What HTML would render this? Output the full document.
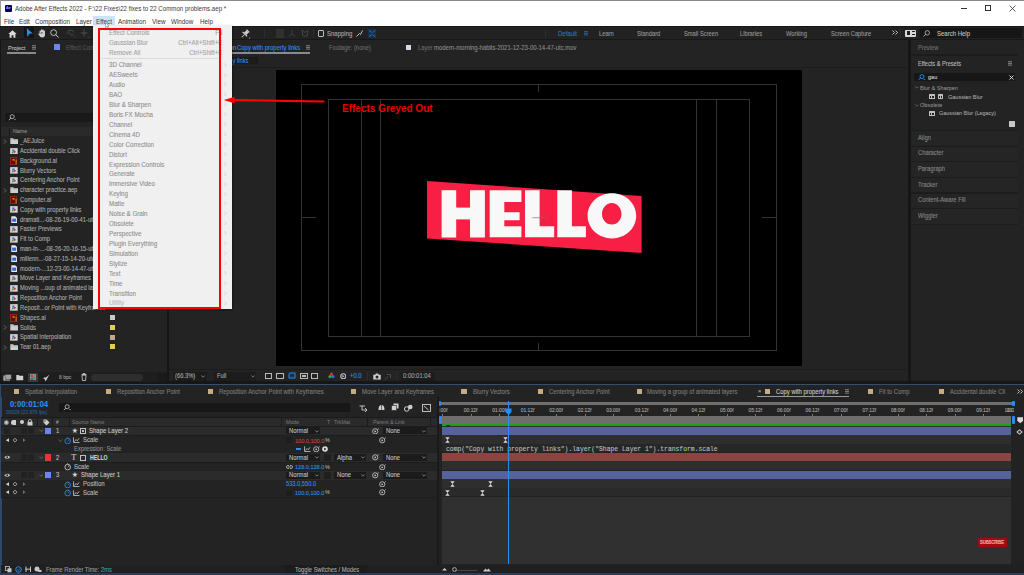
<!DOCTYPE html>
<html><head><meta charset="utf-8"><title>After Effects</title>
<style>
html,body{margin:0;padding:0;}
body{width:1024px;height:575px;overflow:hidden;position:relative;background:#161616;font-family:"Liberation Sans",sans-serif;}
body>div{position:absolute;white-space:nowrap;-webkit-text-stroke:0.1px currentColor;}
</style></head><body>
<div style="left:0px;top:0px;width:1024px;height:575px;background:#161616;"></div>
<div style="left:0px;top:0px;width:1024px;height:25.7px;background:#ffffff;"></div>
<div style="left:0px;top:0px;width:1024px;height:1px;background:#8a8a8a;"></div>
<div style="left:0px;top:0px;width:1px;height:25.7px;background:#9a9a9a;"></div>
<div style="left:5px;top:4.5px;width:7px;height:7px;background:#00005b;border-radius:1px;"></div>
<div style="left:5.6px;top:5.8px;font-size:4.0px;line-height:4.8px;color:#9999ff;font-weight:bold;font-family:'Liberation Sans',sans-serif;transform:scaleX(0.9);transform-origin:0 50%;">Ae</div>
<div style="left:14.5px;top:4.91px;font-size:6.82px;line-height:8.18px;color:#3a3a3a;font-weight:normal;font-family:'Liberation Sans',sans-serif;-webkit-text-stroke:0;transform:scaleX(0.9);transform-origin:0 50%;">Adobe After Effects 2022 - F:\22 Fixes\22 fixes to 22 Common problems.aep *</div>
<div style="left:961px;top:7.5px;width:6px;height:0.8px;background:#333;"></div>
<div style="left:985px;top:5px;width:5.5px;height:5.5px;background:transparent;border:0.8px solid #333;box-sizing:border-box;"></div>
<svg style="position:absolute;left:1009px;top:4.5px;" width="7" height="7" viewBox="0 0 7 7"><path d="M0.5 0.5L6.5 6.5M6.5 0.5L0.5 6.5" stroke="#333" stroke-width="0.8"/></svg>
<div style="left:93.2px;top:16px;width:21.8px;height:9.4px;background:#cce4f7;"></div>
<div style="left:4.2px;top:17.7px;font-size:7.0px;line-height:8.4px;color:#333333;font-weight:normal;font-family:'Liberation Sans',sans-serif;-webkit-text-stroke:0;transform:scaleX(0.9);transform-origin:0 50%;">File</div>
<div style="left:18.7px;top:17.7px;font-size:7.0px;line-height:8.4px;color:#333333;font-weight:normal;font-family:'Liberation Sans',sans-serif;-webkit-text-stroke:0;transform:scaleX(0.9);transform-origin:0 50%;">Edit</div>
<div style="left:35.2px;top:17.7px;font-size:7.0px;line-height:8.4px;color:#333333;font-weight:normal;font-family:'Liberation Sans',sans-serif;-webkit-text-stroke:0;transform:scaleX(0.9);transform-origin:0 50%;">Composition</div>
<div style="left:76.2px;top:17.7px;font-size:7.0px;line-height:8.4px;color:#333333;font-weight:normal;font-family:'Liberation Sans',sans-serif;-webkit-text-stroke:0;transform:scaleX(0.9);transform-origin:0 50%;">Layer</div>
<div style="left:96px;top:17.7px;font-size:7.0px;line-height:8.4px;color:#3a4a65;font-weight:normal;font-family:'Liberation Sans',sans-serif;-webkit-text-stroke:0;transform:scaleX(0.9);transform-origin:0 50%;">Effect</div>
<div style="left:118.3px;top:17.7px;font-size:7.0px;line-height:8.4px;color:#333333;font-weight:normal;font-family:'Liberation Sans',sans-serif;-webkit-text-stroke:0;transform:scaleX(0.9);transform-origin:0 50%;">Animation</div>
<div style="left:152.3px;top:17.7px;font-size:7.0px;line-height:8.4px;color:#333333;font-weight:normal;font-family:'Liberation Sans',sans-serif;-webkit-text-stroke:0;transform:scaleX(0.9);transform-origin:0 50%;">View</div>
<div style="left:171px;top:17.7px;font-size:7.0px;line-height:8.4px;color:#333333;font-weight:normal;font-family:'Liberation Sans',sans-serif;-webkit-text-stroke:0;transform:scaleX(0.9);transform-origin:0 50%;">Window</div>
<div style="left:200px;top:17.7px;font-size:7.0px;line-height:8.4px;color:#333333;font-weight:normal;font-family:'Liberation Sans',sans-serif;-webkit-text-stroke:0;transform:scaleX(0.9);transform-origin:0 50%;">Help</div>
<div style="left:0px;top:25.7px;width:1024px;height:14.3px;background:#181818;"></div>
<div style="left:0px;top:27px;width:1024px;height:11.7px;background:#222222;"></div>
<div style="left:23.9px;top:27.3px;width:9.9px;height:10.7px;background:#141414;"></div>
<svg style="position:absolute;left:8px;top:29.5px;" width="9" height="8" viewBox="0 0 9 8"><path d="M4.5 0.3L0.3 4H1.6V7.7H3.6V5.3H5.4V7.7H7.4V4H8.7Z" fill="#d8d8d8"/></svg>
<svg style="position:absolute;left:25.5px;top:28.3px;" width="8" height="10" viewBox="0 0 8 10"><path d="M0.8 0.3L6.8 5.5L3.8 5.6L1.3 8.9Z" fill="#2d8ceb"/></svg>
<svg style="position:absolute;left:37.5px;top:29px;" width="8.5" height="9" viewBox="0 0 8.5 9"><path d="M1.5 4.2V2.2Q1.5 1.5 2.2 1.5Q2.9 1.5 2.9 2.2V4M2.9 3.5V1Q2.9 0.3 3.6 0.3Q4.3 0.3 4.3 1V3.5M4.3 3.5V1.2Q4.3 0.5 5 0.5Q5.7 0.5 5.7 1.2V4M5.7 4V2.2Q5.7 1.6 6.3 1.6Q7 1.6 7 2.2V5.5Q7 8.5 4.3 8.5Q2 8.5 0.5 5.5L0.4 4.7Q0.8 4 1.5 4.6Z" fill="#d0d0d0"/></svg>
<svg style="position:absolute;left:50px;top:29px;" width="9" height="9" viewBox="0 0 9 9"><circle cx="3.6" cy="3.6" r="2.9" fill="none" stroke="#c8c8c8" stroke-width="0.9"/><path d="M5.7 5.7L8.6 8.6" stroke="#c8c8c8" stroke-width="1"/></svg>
<svg style="position:absolute;left:66px;top:29px;" width="10" height="9" viewBox="0 0 10 9"><path d="M2 5Q0.5 2 4 1.3Q7.5 0.7 7.8 3.5M3 3.5L5.5 6.5L7.5 5.5" fill="none" stroke="#505050" stroke-width="0.9"/><circle cx="8.6" cy="8" r="0.6" fill="#505050"/></svg>
<svg style="position:absolute;left:80px;top:29px;" width="9" height="9" viewBox="0 0 9 9"><path d="M4 0.5V7.5M0.5 4H7.5" stroke="#505050" stroke-width="0.9"/><circle cx="8.2" cy="8.2" r="0.6" fill="#505050"/></svg>
<svg style="position:absolute;left:239.5px;top:28.5px;" width="11" height="10" viewBox="0 0 11 10"><g transform="rotate(45 5 5)" fill="#d0d0d0"><rect x="3" y="0.3" width="4" height="1.3"/><path d="M3.6 1.6H6.4L6.8 4.6H3.2Z"/><rect x="1.8" y="4.6" width="6.4" height="1.2"/><rect x="4.6" y="5.8" width="0.8" height="3.8"/></g><circle cx="9.6" cy="9" r="0.6" fill="#d0d0d0"/></svg>
<div style="left:264px;top:28.5px;width:0.8px;height:9px;background:#2c2c2c;"></div>
<div style="left:275.5px;top:29px;width:8.5px;height:8.5px;background:#303030;"></div>
<svg style="position:absolute;left:288px;top:29px;" width="8" height="9" viewBox="0 0 8 9"><path d="M4 1V4.5L1 7.5M4 4.5L7 7.5" stroke="#4a4a4a" stroke-width="0.8" fill="none"/></svg>
<svg style="position:absolute;left:300.5px;top:29px;" width="8" height="9" viewBox="0 0 8 9"><path d="M1 1L4 3.5L7 1.5L6 7L2 7Z" stroke="#4a4a4a" stroke-width="0.8" fill="none"/></svg>
<div style="left:313px;top:28.5px;width:0.8px;height:9px;background:#2c2c2c;"></div>
<div style="left:317.5px;top:30.3px;width:6.7px;height:6.3px;background:transparent;border:0.9px solid #bdbdbd;box-sizing:border-box;border-radius:1px;"></div>
<div style="left:326.7px;top:29.8px;font-size:6.67px;line-height:8.0px;color:#a8a8a8;font-weight:normal;font-family:'Liberation Sans',sans-serif;transform:scaleX(0.9);transform-origin:0 50%;">Snapping</div>
<svg style="position:absolute;left:355.5px;top:29.5px;" width="7" height="7" viewBox="0 0 7 7"><path d="M0.5 6.5L3.5 3.5L4.5 4.5L6.5 0.5" stroke="#cfcfcf" stroke-width="0.9" fill="none"/></svg>
<div style="left:367.5px;top:28.5px;width:8.5px;height:9px;background:#17324d;"></div>
<svg style="position:absolute;left:367.5px;top:28.5px;" width="8.5" height="9" viewBox="0 0 8.5 9"><path d="M1.5 1.5L3.5 3.5M7 1.5L5 3.5M1.5 7.5L3.5 5.5M7 7.5L5 5.5" stroke="#2d8ceb" stroke-width="0.9"/></svg>
<div style="left:545px;top:28.5px;width:0.8px;height:9px;background:#2c2c2c;"></div>
<div style="left:557.5px;top:30.2px;font-size:6.67px;line-height:8.0px;color:#2a72c0;font-weight:normal;font-family:'Liberation Sans',sans-serif;transform:scaleX(0.9);transform-origin:0 50%;">Default</div>
<svg style="position:absolute;left:583.5px;top:31.3px;" width="4.5" height="5" viewBox="0 0 4.5 5"><path d="M0 0.7H4M0 2.3H4M0 3.9H4" stroke="#2a72c0" stroke-width="0.8"/></svg>
<div style="left:599.4px;top:30.37px;font-size:6.39px;line-height:7.67px;color:#969696;font-weight:normal;font-family:'Liberation Sans',sans-serif;transform:scaleX(0.9);transform-origin:0 50%;">Learn</div>
<div style="left:637px;top:30.37px;font-size:6.39px;line-height:7.67px;color:#969696;font-weight:normal;font-family:'Liberation Sans',sans-serif;transform:scaleX(0.9);transform-origin:0 50%;">Standard</div>
<div style="left:683.75px;top:30.37px;font-size:6.39px;line-height:7.67px;color:#969696;font-weight:normal;font-family:'Liberation Sans',sans-serif;transform:scaleX(0.9);transform-origin:0 50%;">Small Screen</div>
<div style="left:740px;top:30.37px;font-size:6.39px;line-height:7.67px;color:#969696;font-weight:normal;font-family:'Liberation Sans',sans-serif;transform:scaleX(0.9);transform-origin:0 50%;">Libraries</div>
<div style="left:786px;top:30.37px;font-size:6.39px;line-height:7.67px;color:#969696;font-weight:normal;font-family:'Liberation Sans',sans-serif;transform:scaleX(0.9);transform-origin:0 50%;">Working</div>
<div style="left:831px;top:30.37px;font-size:6.39px;line-height:7.67px;color:#969696;font-weight:normal;font-family:'Liberation Sans',sans-serif;transform:scaleX(0.9);transform-origin:0 50%;">Screen Capture</div>
<svg style="position:absolute;left:891.5px;top:30.3px;" width="7" height="5" viewBox="0 0 7 5"><path d="M0.5 0.5L2.5 2.5L0.5 4.5M3.5 0.5L5.5 2.5L3.5 4.5" stroke="#d0d0d0" stroke-width="0.9" fill="none"/></svg>
<div style="left:900px;top:28.5px;width:0.8px;height:9px;background:#2c2c2c;"></div>
<div style="left:905px;top:29.5px;width:11px;height:7px;background:#d8d8d8;border-radius:1px;"></div>
<div style="left:907px;top:31px;width:3px;height:4px;background:#1e1e1e;"></div>
<div style="left:911.5px;top:31px;width:3px;height:1.2px;background:#1e1e1e;"></div>
<div style="left:911.5px;top:33.5px;width:3px;height:1.2px;background:#1e1e1e;"></div>
<div style="left:919.5px;top:28.3px;width:102px;height:9.5px;background:#161616;border-radius:1px;"></div>
<svg style="position:absolute;left:922.5px;top:29.5px;" width="7" height="7" viewBox="0 0 7 7"><circle cx="4.3" cy="2.8" r="2.2" fill="none" stroke="#c0c0c0" stroke-width="0.8"/><path d="M2.7 4.4L0.5 6.6" stroke="#c0c0c0" stroke-width="0.9"/></svg>
<div style="left:936.5px;top:29.8px;font-size:6.67px;line-height:8.0px;color:#c0c0c0;font-weight:normal;font-family:'Liberation Sans',sans-serif;transform:scaleX(0.9);transform-origin:0 50%;">Search Help</div>
<div style="left:1px;top:39.5px;width:166px;height:332px;background:#232323;"></div>
<div style="left:7.75px;top:43.97px;font-size:6.22px;line-height:7.46px;color:#bcbcbc;font-weight:normal;font-family:'Liberation Sans',sans-serif;transform:scaleX(0.9);transform-origin:0 50%;">Project</div>
<div style="left:6.9px;top:52.2px;width:29.4px;height:1.6px;background:#8a8a8a;"></div>
<svg style="position:absolute;left:31.8px;top:45.2px;" width="4.5" height="5" viewBox="0 0 4.5 5"><path d="M0 0.7H4M0 2.4H4M0 4.1H4" stroke="#9a9a9a" stroke-width="0.8"/></svg>
<div style="left:54.3px;top:44.3px;width:5.6px;height:5.3px;background:#6b86f0;border-radius:0.5px;"></div>
<div style="left:65.6px;top:44.27px;font-size:6.56px;line-height:7.87px;color:#555555;font-weight:normal;font-family:'Liberation Sans',sans-serif;transform:scaleX(0.9);transform-origin:0 50%;">Effect Controls Shape Layer 2</div>
<div style="left:5px;top:112.6px;width:162px;height:9.2px;background:#191919;"></div>
<svg style="position:absolute;left:7.5px;top:114px;" width="9" height="7" viewBox="0 0 9 7"><circle cx="4.2" cy="2.7" r="2" fill="none" stroke="#c8c8c8" stroke-width="0.8"/><path d="M2.8 4.2L0.8 6.2" stroke="#c8c8c8" stroke-width="0.9"/><path d="M6 5.2H8L7 6.3Z" fill="#c8c8c8"/></svg>
<div style="left:1px;top:126.7px;width:166px;height:9.3px;background:#2a2a2a;"></div>
<div style="left:8.5px;top:127.5px;width:0.7px;height:8px;background:#1a1a1a;"></div>
<div style="left:12.5px;top:128.06px;font-size:5.89px;line-height:7.07px;color:#8c8c8c;font-weight:normal;font-family:'Liberation Sans',sans-serif;transform:scaleX(0.9);transform-origin:0 50%;">Name</div>
<svg style="position:absolute;left:2.5px;top:138.5px;" width="4" height="5" viewBox="0 0 4 5"><path d="M1 0.5L3 2.5L1 4.5" stroke="#8a8a8a" stroke-width="0.7" fill="none"/></svg>
<svg style="position:absolute;left:9.6px;top:137.6px;" width="8.5" height="6.8" viewBox="0 0 8.5 6.8"><path d="M0.3 0.3H3.2L4 1.2H8.2V6.5H0.3Z" fill="#cfcfcf"/><path d="M0.3 1.9H8.2" stroke="#9a9a9a" stroke-width="0.5"/></svg>
<div style="left:20px;top:137.13px;font-size:6.44px;line-height:7.73px;color:#aaaaaa;font-weight:normal;font-family:'Liberation Sans',sans-serif;transform:scaleX(0.9);transform-origin:0 50%;">_AEJuice</div>
<svg style="position:absolute;left:9.8px;top:147.51px;" width="7.8" height="6.8" viewBox="0 0 7.8 6.8"><rect x="0" y="0" width="7.8" height="6.8" rx="0.6" fill="#bcbcbc"/><rect x="0.9" y="0.9" width="6" height="5" fill="#d4d4d4"/><path d="M2.2 1.6L4.6 1.4L4.2 3.6L2.4 3.4Z" fill="#3d6fd0"/><path d="M4.6 2.6L6 3.8L4.6 5.2L3.4 4Z" fill="#c33a2e"/><path d="M2 3.6L3.6 4.2L3.2 5.6L1.8 5.2Z" fill="#3a9a44"/></svg>
<div style="left:20px;top:146.94px;font-size:6.44px;line-height:7.73px;color:#aaaaaa;font-weight:normal;font-family:'Liberation Sans',sans-serif;transform:scaleX(0.9);transform-origin:0 50%;">Accidental double Click</div>
<svg style="position:absolute;left:10.2px;top:156.62px;" width="7.2" height="8" viewBox="0 0 7.2 8"><rect x="0" y="0" width="7.2" height="8" fill="#9a2a1a"/><rect x="0.8" y="0.8" width="5.6" height="6.4" fill="#6a0a06"/><path d="M2 3.2Q2.5 1.8 4 2Q5.2 2.2 4.6 3.6L4 4.2L3.6 3.4Z" fill="#e08a1a"/><rect x="5.6" y="2.6" width="1" height="4.6" fill="#d88a20"/></svg>
<div style="left:20px;top:156.75px;font-size:6.44px;line-height:7.73px;color:#aaaaaa;font-weight:normal;font-family:'Liberation Sans',sans-serif;transform:scaleX(0.9);transform-origin:0 50%;">Background.ai</div>
<svg style="position:absolute;left:9.8px;top:167.13px;" width="7.8" height="6.8" viewBox="0 0 7.8 6.8"><rect x="0" y="0" width="7.8" height="6.8" rx="0.6" fill="#bcbcbc"/><rect x="0.9" y="0.9" width="6" height="5" fill="#d4d4d4"/><path d="M2.2 1.6L4.6 1.4L4.2 3.6L2.4 3.4Z" fill="#3d6fd0"/><path d="M4.6 2.6L6 3.8L4.6 5.2L3.4 4Z" fill="#c33a2e"/><path d="M2 3.6L3.6 4.2L3.2 5.6L1.8 5.2Z" fill="#3a9a44"/></svg>
<div style="left:20px;top:166.56px;font-size:6.44px;line-height:7.73px;color:#aaaaaa;font-weight:normal;font-family:'Liberation Sans',sans-serif;transform:scaleX(0.9);transform-origin:0 50%;">Blurry Vectors</div>
<svg style="position:absolute;left:9.8px;top:176.94px;" width="7.8" height="6.8" viewBox="0 0 7.8 6.8"><rect x="0" y="0" width="7.8" height="6.8" rx="0.6" fill="#bcbcbc"/><rect x="0.9" y="0.9" width="6" height="5" fill="#d4d4d4"/><path d="M2.2 1.6L4.6 1.4L4.2 3.6L2.4 3.4Z" fill="#3d6fd0"/><path d="M4.6 2.6L6 3.8L4.6 5.2L3.4 4Z" fill="#c33a2e"/><path d="M2 3.6L3.6 4.2L3.2 5.6L1.8 5.2Z" fill="#3a9a44"/></svg>
<div style="left:20px;top:176.38px;font-size:6.44px;line-height:7.73px;color:#aaaaaa;font-weight:normal;font-family:'Liberation Sans',sans-serif;transform:scaleX(0.9);transform-origin:0 50%;">Centering Anchor Point</div>
<svg style="position:absolute;left:2.5px;top:187.55px;" width="4" height="5" viewBox="0 0 4 5"><path d="M1 0.5L3 2.5L1 4.5" stroke="#8a8a8a" stroke-width="0.7" fill="none"/></svg>
<svg style="position:absolute;left:9.6px;top:186.65px;" width="8.5" height="6.8" viewBox="0 0 8.5 6.8"><path d="M0.3 0.3H3.2L4 1.2H8.2V6.5H0.3Z" fill="#cfcfcf"/><path d="M0.3 1.9H8.2" stroke="#9a9a9a" stroke-width="0.5"/></svg>
<div style="left:20px;top:186.19px;font-size:6.44px;line-height:7.73px;color:#aaaaaa;font-weight:normal;font-family:'Liberation Sans',sans-serif;transform:scaleX(0.9);transform-origin:0 50%;">character practice.aep</div>
<svg style="position:absolute;left:10.2px;top:195.86px;" width="7.2" height="8" viewBox="0 0 7.2 8"><rect x="0" y="0" width="7.2" height="8" fill="#9a2a1a"/><rect x="0.8" y="0.8" width="5.6" height="6.4" fill="#6a0a06"/><path d="M2 3.2Q2.5 1.8 4 2Q5.2 2.2 4.6 3.6L4 4.2L3.6 3.4Z" fill="#e08a1a"/><rect x="5.6" y="2.6" width="1" height="4.6" fill="#d88a20"/></svg>
<div style="left:20px;top:196.0px;font-size:6.44px;line-height:7.73px;color:#aaaaaa;font-weight:normal;font-family:'Liberation Sans',sans-serif;transform:scaleX(0.9);transform-origin:0 50%;">Computer.ai</div>
<svg style="position:absolute;left:9.8px;top:206.37px;" width="7.8" height="6.8" viewBox="0 0 7.8 6.8"><rect x="0" y="0" width="7.8" height="6.8" rx="0.6" fill="#bcbcbc"/><rect x="0.9" y="0.9" width="6" height="5" fill="#d4d4d4"/><path d="M2.2 1.6L4.6 1.4L4.2 3.6L2.4 3.4Z" fill="#3d6fd0"/><path d="M4.6 2.6L6 3.8L4.6 5.2L3.4 4Z" fill="#c33a2e"/><path d="M2 3.6L3.6 4.2L3.2 5.6L1.8 5.2Z" fill="#3a9a44"/></svg>
<div style="left:20px;top:205.81px;font-size:6.44px;line-height:7.73px;color:#aaaaaa;font-weight:normal;font-family:'Liberation Sans',sans-serif;transform:scaleX(0.9);transform-origin:0 50%;">Copy with property links</div>
<svg style="position:absolute;left:10.8px;top:215.88000000000002px;" width="6.4" height="7.4" viewBox="0 0 6.4 7.4"><path d="M0.3 0.3H4.2L6.1 2.2V7.1H0.3Z" fill="#e6e9f0"/><rect x="1.2" y="2.6" width="4" height="3.2" fill="#3569d4"/></svg>
<div style="left:20px;top:215.62px;font-size:6.44px;line-height:7.73px;color:#aaaaaa;font-weight:normal;font-family:'Liberation Sans',sans-serif;transform:scaleX(0.9);transform-origin:0 50%;">dramati...-08-26-19-00-41-utc.mov</div>
<svg style="position:absolute;left:9.8px;top:225.99px;" width="7.8" height="6.8" viewBox="0 0 7.8 6.8"><rect x="0" y="0" width="7.8" height="6.8" rx="0.6" fill="#bcbcbc"/><rect x="0.9" y="0.9" width="6" height="5" fill="#d4d4d4"/><path d="M2.2 1.6L4.6 1.4L4.2 3.6L2.4 3.4Z" fill="#3d6fd0"/><path d="M4.6 2.6L6 3.8L4.6 5.2L3.4 4Z" fill="#c33a2e"/><path d="M2 3.6L3.6 4.2L3.2 5.6L1.8 5.2Z" fill="#3a9a44"/></svg>
<div style="left:20px;top:225.43px;font-size:6.44px;line-height:7.73px;color:#aaaaaa;font-weight:normal;font-family:'Liberation Sans',sans-serif;transform:scaleX(0.9);transform-origin:0 50%;">Faster Previews</div>
<svg style="position:absolute;left:9.8px;top:235.8px;" width="7.8" height="6.8" viewBox="0 0 7.8 6.8"><rect x="0" y="0" width="7.8" height="6.8" rx="0.6" fill="#bcbcbc"/><rect x="0.9" y="0.9" width="6" height="5" fill="#d4d4d4"/><path d="M2.2 1.6L4.6 1.4L4.2 3.6L2.4 3.4Z" fill="#3d6fd0"/><path d="M4.6 2.6L6 3.8L4.6 5.2L3.4 4Z" fill="#c33a2e"/><path d="M2 3.6L3.6 4.2L3.2 5.6L1.8 5.2Z" fill="#3a9a44"/></svg>
<div style="left:20px;top:235.24px;font-size:6.44px;line-height:7.73px;color:#aaaaaa;font-weight:normal;font-family:'Liberation Sans',sans-serif;transform:scaleX(0.9);transform-origin:0 50%;">Fit to Comp</div>
<svg style="position:absolute;left:10.8px;top:245.31000000000003px;" width="6.4" height="7.4" viewBox="0 0 6.4 7.4"><path d="M0.3 0.3H4.2L6.1 2.2V7.1H0.3Z" fill="#e6e9f0"/><rect x="1.2" y="2.6" width="4" height="3.2" fill="#3569d4"/></svg>
<div style="left:20px;top:245.05px;font-size:6.44px;line-height:7.73px;color:#aaaaaa;font-weight:normal;font-family:'Liberation Sans',sans-serif;transform:scaleX(0.9);transform-origin:0 50%;">man-in-...-08-26-20-16-15-utc.mov</div>
<svg style="position:absolute;left:10.8px;top:255.12000000000003px;" width="6.4" height="7.4" viewBox="0 0 6.4 7.4"><path d="M0.3 0.3H4.2L6.1 2.2V7.1H0.3Z" fill="#e6e9f0"/><rect x="1.2" y="2.6" width="4" height="3.2" fill="#3569d4"/></svg>
<div style="left:20px;top:254.86px;font-size:6.44px;line-height:7.73px;color:#aaaaaa;font-weight:normal;font-family:'Liberation Sans',sans-serif;transform:scaleX(0.9);transform-origin:0 50%;">millenn...-08-27-15-14-20-utc.mov</div>
<svg style="position:absolute;left:10.8px;top:264.92999999999995px;" width="6.4" height="7.4" viewBox="0 0 6.4 7.4"><path d="M0.3 0.3H4.2L6.1 2.2V7.1H0.3Z" fill="#e6e9f0"/><rect x="1.2" y="2.6" width="4" height="3.2" fill="#3569d4"/></svg>
<div style="left:20px;top:264.66px;font-size:6.44px;line-height:7.73px;color:#aaaaaa;font-weight:normal;font-family:'Liberation Sans',sans-serif;transform:scaleX(0.9);transform-origin:0 50%;">modern-...12-23-00-14-47-utc.mov</div>
<svg style="position:absolute;left:9.8px;top:275.04px;" width="7.8" height="6.8" viewBox="0 0 7.8 6.8"><rect x="0" y="0" width="7.8" height="6.8" rx="0.6" fill="#bcbcbc"/><rect x="0.9" y="0.9" width="6" height="5" fill="#d4d4d4"/><path d="M2.2 1.6L4.6 1.4L4.2 3.6L2.4 3.4Z" fill="#3d6fd0"/><path d="M4.6 2.6L6 3.8L4.6 5.2L3.4 4Z" fill="#c33a2e"/><path d="M2 3.6L3.6 4.2L3.2 5.6L1.8 5.2Z" fill="#3a9a44"/></svg>
<div style="left:20px;top:274.48px;font-size:6.44px;line-height:7.73px;color:#aaaaaa;font-weight:normal;font-family:'Liberation Sans',sans-serif;transform:scaleX(0.9);transform-origin:0 50%;">Move Layer and Keyframes</div>
<svg style="position:absolute;left:9.8px;top:284.84999999999997px;" width="7.8" height="6.8" viewBox="0 0 7.8 6.8"><rect x="0" y="0" width="7.8" height="6.8" rx="0.6" fill="#bcbcbc"/><rect x="0.9" y="0.9" width="6" height="5" fill="#d4d4d4"/><path d="M2.2 1.6L4.6 1.4L4.2 3.6L2.4 3.4Z" fill="#3d6fd0"/><path d="M4.6 2.6L6 3.8L4.6 5.2L3.4 4Z" fill="#c33a2e"/><path d="M2 3.6L3.6 4.2L3.2 5.6L1.8 5.2Z" fill="#3a9a44"/></svg>
<div style="left:20px;top:284.28px;font-size:6.44px;line-height:7.73px;color:#aaaaaa;font-weight:normal;font-family:'Liberation Sans',sans-serif;transform:scaleX(0.9);transform-origin:0 50%;">Moving ...oup of animated layers</div>
<svg style="position:absolute;left:9.8px;top:294.66px;" width="7.8" height="6.8" viewBox="0 0 7.8 6.8"><rect x="0" y="0" width="7.8" height="6.8" rx="0.6" fill="#bcbcbc"/><rect x="0.9" y="0.9" width="6" height="5" fill="#d4d4d4"/><path d="M2.2 1.6L4.6 1.4L4.2 3.6L2.4 3.4Z" fill="#3d6fd0"/><path d="M4.6 2.6L6 3.8L4.6 5.2L3.4 4Z" fill="#c33a2e"/><path d="M2 3.6L3.6 4.2L3.2 5.6L1.8 5.2Z" fill="#3a9a44"/></svg>
<div style="left:20px;top:294.1px;font-size:6.44px;line-height:7.73px;color:#aaaaaa;font-weight:normal;font-family:'Liberation Sans',sans-serif;transform:scaleX(0.9);transform-origin:0 50%;">Reposition Anchor Point</div>
<svg style="position:absolute;left:9.8px;top:304.46999999999997px;" width="7.8" height="6.8" viewBox="0 0 7.8 6.8"><rect x="0" y="0" width="7.8" height="6.8" rx="0.6" fill="#bcbcbc"/><rect x="0.9" y="0.9" width="6" height="5" fill="#d4d4d4"/><path d="M2.2 1.6L4.6 1.4L4.2 3.6L2.4 3.4Z" fill="#3d6fd0"/><path d="M4.6 2.6L6 3.8L4.6 5.2L3.4 4Z" fill="#c33a2e"/><path d="M2 3.6L3.6 4.2L3.2 5.6L1.8 5.2Z" fill="#3a9a44"/></svg>
<div style="left:20px;top:303.9px;font-size:6.44px;line-height:7.73px;color:#aaaaaa;font-weight:normal;font-family:'Liberation Sans',sans-serif;transform:scaleX(0.9);transform-origin:0 50%;">Reposit...or Point with Keyframes</div>
<svg style="position:absolute;left:10.2px;top:313.58000000000004px;" width="7.2" height="8" viewBox="0 0 7.2 8"><rect x="0" y="0" width="7.2" height="8" fill="#9a2a1a"/><rect x="0.8" y="0.8" width="5.6" height="6.4" fill="#6a0a06"/><path d="M2 3.2Q2.5 1.8 4 2Q5.2 2.2 4.6 3.6L4 4.2L3.6 3.4Z" fill="#e08a1a"/><rect x="5.6" y="2.6" width="1" height="4.6" fill="#d88a20"/></svg>
<div style="left:20px;top:313.72px;font-size:6.44px;line-height:7.73px;color:#aaaaaa;font-weight:normal;font-family:'Liberation Sans',sans-serif;transform:scaleX(0.9);transform-origin:0 50%;">Shapes.ai</div>
<div style="left:110px;top:314.98px;width:5px;height:5px;background:#c9c9c9;"></div>
<svg style="position:absolute;left:2.5px;top:324.89px;" width="4" height="5" viewBox="0 0 4 5"><path d="M1 0.5L3 2.5L1 4.5" stroke="#8a8a8a" stroke-width="0.7" fill="none"/></svg>
<svg style="position:absolute;left:9.6px;top:323.99px;" width="8.5" height="6.8" viewBox="0 0 8.5 6.8"><path d="M0.3 0.3H3.2L4 1.2H8.2V6.5H0.3Z" fill="#cfcfcf"/><path d="M0.3 1.9H8.2" stroke="#9a9a9a" stroke-width="0.5"/></svg>
<div style="left:20px;top:323.52px;font-size:6.44px;line-height:7.73px;color:#aaaaaa;font-weight:normal;font-family:'Liberation Sans',sans-serif;transform:scaleX(0.9);transform-origin:0 50%;">Solids</div>
<div style="left:110px;top:324.78999999999996px;width:5px;height:5px;background:#e3cf4f;"></div>
<svg style="position:absolute;left:9.8px;top:333.90000000000003px;" width="7.8" height="6.8" viewBox="0 0 7.8 6.8"><rect x="0" y="0" width="7.8" height="6.8" rx="0.6" fill="#bcbcbc"/><rect x="0.9" y="0.9" width="6" height="5" fill="#d4d4d4"/><path d="M2.2 1.6L4.6 1.4L4.2 3.6L2.4 3.4Z" fill="#3d6fd0"/><path d="M4.6 2.6L6 3.8L4.6 5.2L3.4 4Z" fill="#c33a2e"/><path d="M2 3.6L3.6 4.2L3.2 5.6L1.8 5.2Z" fill="#3a9a44"/></svg>
<div style="left:20px;top:333.34px;font-size:6.44px;line-height:7.73px;color:#aaaaaa;font-weight:normal;font-family:'Liberation Sans',sans-serif;transform:scaleX(0.9);transform-origin:0 50%;">Spatial Interpolation</div>
<div style="left:110px;top:334.6px;width:5px;height:5px;background:#bfa98a;"></div>
<svg style="position:absolute;left:2.5px;top:344.51px;" width="4" height="5" viewBox="0 0 4 5"><path d="M1 0.5L3 2.5L1 4.5" stroke="#8a8a8a" stroke-width="0.7" fill="none"/></svg>
<svg style="position:absolute;left:9.6px;top:343.61px;" width="8.5" height="6.8" viewBox="0 0 8.5 6.8"><path d="M0.3 0.3H3.2L4 1.2H8.2V6.5H0.3Z" fill="#cfcfcf"/><path d="M0.3 1.9H8.2" stroke="#9a9a9a" stroke-width="0.5"/></svg>
<div style="left:20px;top:343.14px;font-size:6.44px;line-height:7.73px;color:#aaaaaa;font-weight:normal;font-family:'Liberation Sans',sans-serif;transform:scaleX(0.9);transform-origin:0 50%;">Tear 01.aep</div>
<div style="left:110px;top:344.40999999999997px;width:5px;height:5px;background:#e3cf4f;"></div>
<div style="left:1px;top:372.3px;width:166px;height:9.9px;background:#1e1e1e;"></div>
<div style="left:158px;top:372.6px;width:8.5px;height:9.3px;background:#1a1a1a;"></div>
<svg style="position:absolute;left:3px;top:373.8px;" width="9" height="7" viewBox="0 0 9 7"><rect x="0.5" y="1.5" width="6.5" height="5" fill="#cfcfcf"/><rect x="2" y="0.3" width="6.5" height="5" fill="#a0a0a0" stroke="#1c1c1c" stroke-width="0.5"/></svg>
<svg style="position:absolute;left:16.4px;top:374px;" width="7.5" height="6.5" viewBox="0 0 7.5 6.5"><path d="M0.3 1H2.8L3.5 1.8H7.2V6.2H0.3Z" fill="#d0d0d0"/></svg>
<div style="left:28px;top:373px;width:9.5px;height:8.5px;background:#3a3a3a;"></div>
<div style="left:29.5px;top:374.3px;width:6.5px;height:5.8px;background:#8a8a8a;"></div>
<div style="left:30.5px;top:375.2px;width:2.3px;height:2.3px;background:#d03030;"></div>
<div style="left:32.6px;top:376.8px;width:2.3px;height:2.3px;background:#3aa040;"></div>
<div style="left:31px;top:377.5px;width:2px;height:2px;background:#3060d0;"></div>
<svg style="position:absolute;left:43px;top:373.5px;" width="7" height="8" viewBox="0 0 7 8"><path d="M6.5 0.5L3 3.5L1 3.5L0.5 5L2 5.2L2.3 7.5L3.5 6L4.5 4L6.5 0.5Z" fill="#cccccc"/></svg>
<div style="left:59.4px;top:373.97px;font-size:5.56px;line-height:6.67px;color:#9a9a9a;font-weight:normal;font-family:'Liberation Sans',sans-serif;transform:scaleX(0.9);transform-origin:0 50%;">8 bpc</div>
<svg style="position:absolute;left:80.5px;top:373.3px;" width="6" height="8" viewBox="0 0 6 8"><path d="M0.5 1.5H5.5M2 1.5V0.5H4V1.5M1 2.2H5L4.6 7.5H1.4Z" fill="none" stroke="#cfcfcf" stroke-width="0.8"/></svg>
<div style="left:91.4px;top:373.8px;width:51.6px;height:7px;background:#2e2e2e;border-radius:3.5px;"></div>
<div style="left:168.6px;top:39.5px;width:739.6px;height:332px;background:#232323;"></div>
<div style="left:202.6px;top:43.64px;font-size:6.61px;line-height:7.93px;color:#8a8a8a;font-weight:normal;font-family:'Liberation Sans',sans-serif;transform:scaleX(0.9);transform-origin:0 50%;">Composition</div>
<div style="left:236.7px;top:43.64px;font-size:6.61px;line-height:7.93px;color:#2d8ceb;font-weight:normal;font-family:'Liberation Sans',sans-serif;transform:scaleX(0.9);transform-origin:0 50%;">Copy with property links</div>
<svg style="position:absolute;left:306px;top:45.2px;" width="4.5" height="5" viewBox="0 0 4.5 5"><path d="M0 0.7H4M0 2.4H4M0 4.1H4" stroke="#9a9a9a" stroke-width="0.8"/></svg>
<div style="left:172px;top:52.2px;width:138px;height:1.6px;background:#8a8a8a;"></div>
<div style="left:328.8px;top:43.66px;font-size:6.56px;line-height:7.87px;color:#6a6a6a;font-weight:normal;font-family:'Liberation Sans',sans-serif;transform:scaleX(0.9);transform-origin:0 50%;">Footage: (none)</div>
<div style="left:406px;top:45px;width:5px;height:5px;background:#d4dbe6;"></div>
<div style="left:417.5px;top:43.66px;font-size:6.56px;line-height:7.87px;color:#6a6a6a;font-weight:normal;font-family:'Liberation Sans',sans-serif;transform:scaleX(0.9);transform-origin:0 50%;">Layer</div>
<div style="left:433.75px;top:43.64px;font-size:6.61px;line-height:7.93px;color:#8a8a8a;font-weight:normal;font-family:'Liberation Sans',sans-serif;transform:scaleX(0.9);transform-origin:0 50%;">modern-morning-habits-2021-12-23-00-14-47-utc.mov</div>
<div style="left:174px;top:56.8px;width:84px;height:7.6px;background:#1b1b1b;"></div>
<div style="left:187px;top:56.53px;font-size:6.44px;line-height:7.73px;color:#2d8ceb;font-weight:normal;font-family:'Liberation Sans',sans-serif;transform:scaleX(0.9);transform-origin:0 50%;">Copy with property links</div>
<div style="left:168.6px;top:67px;width:739.6px;height:0.8px;background:#1c1c1c;"></div>
<div style="left:275.6px;top:70px;width:526.6px;height:296px;background:#000000;"></div>
<div style="left:301.3px;top:83.8px;width:475.3px;height:267.2px;background:transparent;border:1.2px solid #333333;box-sizing:border-box;"></div>
<div style="left:327.5px;top:98.5px;width:422.2px;height:238.6px;background:transparent;border:1.2px solid #333333;box-sizing:border-box;"></div>
<div style="left:360.6px;top:98.5px;width:1.2px;height:238.6px;background:#333333;"></div>
<div style="left:380.1px;top:98.5px;width:1.2px;height:238.6px;background:#333333;"></div>
<div style="left:695.6px;top:98.5px;width:1.2px;height:238.6px;background:#333333;"></div>
<div style="left:715.8px;top:98.5px;width:1.2px;height:238.6px;background:#333333;"></div>
<div style="left:301.3px;top:216.7px;width:14.7px;height:1.2px;background:#333333;"></div>
<div style="left:761.8px;top:216.7px;width:14.7px;height:1.2px;background:#333333;"></div>
<div style="left:538px;top:83.8px;width:1.2px;height:7.8px;background:#333333;"></div>
<div style="left:538px;top:343.2px;width:1.2px;height:7.8px;background:#333333;"></div>
<svg style="position:absolute;left:420px;top:175px;" width="230" height="85" viewBox="0 0 230 85">
<polygon points="7,6 221.6,21 221.6,78 7,63.5" fill="#f81f44"/>
<g fill="#f8f8f8">
<rect x="21.6" y="15.2" width="14.6" height="47.3"/>
<rect x="50" y="15.2" width="14.9" height="47.3"/>
<rect x="36" y="32.6" width="14.2" height="11.8"/>
<path d="M69.7 15.3H101.4V26.9H84.3V37.3H99.6V45.2H84.3V51.2H101.4V62.2H69.7Z"/>
<path d="M105 15.3H119.6V51.2H134.2V62.2H105Z"/>
<path d="M137.3 15.3H151.9V51.2H165.9V62.2H137.3Z"/>
<path fill-rule="evenodd" d="M192 18.2C205.6 18.2 216.2 28.2 216.2 40.8C216.2 53.4 205.6 63.4 192 63.4C178.4 63.4 167.6 53.4 167.6 40.8C167.6 28.2 178.4 18.2 192 18.2ZM191.8 28C185.9 28 182 33.4 182 38.9C182 44.4 185.9 49.5 191.8 49.5C197.6 49.5 201.5 44.4 201.5 38.9C201.5 33.4 197.6 28 191.8 28Z"/>
</g>
<path d="M112.3 42.7H126.3" stroke="#777" stroke-width="0.7"/>
</svg>
<div style="left:168.6px;top:369.3px;width:739.6px;height:0.8px;background:#1c1c1c;"></div>
<div style="left:168.6px;top:370.1px;width:739.6px;height:10.9px;background:#232323;"></div>
<div style="left:172.5px;top:372px;width:34.5px;height:8.5px;background:#1c1c1c;"></div>
<div style="left:174.8px;top:372.33px;font-size:6.44px;line-height:7.73px;color:#a8a8a8;font-weight:normal;font-family:'Liberation Sans',sans-serif;transform:scaleX(0.9);transform-origin:0 50%;">(66.3%)</div>
<svg style="position:absolute;left:201px;top:374.8px;" width="4" height="3" viewBox="0 0 4 3"><path d="M0.3 0.5L2 2.2L3.7 0.5" stroke="#a0a0a0" stroke-width="0.7" fill="none"/></svg>
<div style="left:214px;top:372px;width:42px;height:8.5px;background:#1c1c1c;"></div>
<div style="left:217px;top:372.33px;font-size:6.44px;line-height:7.73px;color:#a8a8a8;font-weight:normal;font-family:'Liberation Sans',sans-serif;transform:scaleX(0.9);transform-origin:0 50%;">Full</div>
<svg style="position:absolute;left:250.5px;top:374.8px;" width="4" height="3" viewBox="0 0 4 3"><path d="M0.3 0.5L2 2.2L3.7 0.5" stroke="#a0a0a0" stroke-width="0.7" fill="none"/></svg>
<div style="left:264.7px;top:372.5px;width:7.5px;height:6.5px;background:transparent;border:0.8px solid #b8b8b8;box-sizing:border-box;"></div>
<div style="left:276.4px;top:372.5px;width:7.5px;height:6.5px;background:transparent;border:0.8px solid #b8b8b8;box-sizing:border-box;"></div>
<div style="left:300px;top:372.5px;width:7.5px;height:6.5px;background:transparent;border:0.8px solid #b8b8b8;box-sizing:border-box;"></div>
<div style="left:310.8px;top:372.5px;width:7.5px;height:6.5px;background:transparent;border:0.8px solid #b8b8b8;box-sizing:border-box;"></div>
<div style="left:288px;top:372.3px;width:8px;height:7px;background:#17324d;"></div>
<svg style="position:absolute;left:288px;top:372.3px;" width="8" height="7" viewBox="0 0 8 7"><path d="M1 6V3Q1 1 3 1H7V6Z" fill="none" stroke="#2d8ceb" stroke-width="0.9"/></svg>
<div style="left:302px;top:374.5px;width:3.5px;height:2.5px;background:#b8b8b8;"></div>
<svg style="position:absolute;left:328px;top:372.3px;" width="7" height="8" viewBox="0 0 7 8"><circle cx="3.5" cy="2" r="1.6" fill="#e03030"/><circle cx="2" cy="4.5" r="1.6" fill="#30b040"/><circle cx="5" cy="4.5" r="1.6" fill="#3070e0"/></svg>
<svg style="position:absolute;left:339.7px;top:372.5px;" width="6.5" height="6.5" viewBox="0 0 6.5 6.5"><circle cx="3.25" cy="3.25" r="2.5" fill="none" stroke="#c0c0c0" stroke-width="1.1"/><path d="M2.3 2L4.6 3.25L2.3 4.5Z" fill="#c0c0c0"/></svg>
<div style="left:349.8px;top:372.33px;font-size:6.44px;line-height:7.73px;color:#2d8ceb;font-weight:normal;font-family:'Liberation Sans',sans-serif;transform:scaleX(0.9);transform-origin:0 50%;">+0.0</div>
<div style="left:367px;top:372px;width:0.7px;height:8px;background:#2e2e2e;"></div>
<svg style="position:absolute;left:372.5px;top:372.5px;" width="8" height="7" viewBox="0 0 8 7"><path d="M0.3 1.8H2.2L3 0.5H5L5.8 1.8H7.7V6.5H0.3Z" fill="#cfcfcf"/><circle cx="4" cy="4" r="1.5" fill="#232323"/></svg>
<svg style="position:absolute;left:384px;top:372.5px;" width="8" height="7" viewBox="0 0 8 7"><path d="M1 6.5L4 3.5M3 1.5H6.5V5" stroke="#505050" stroke-width="0.9" fill="none"/></svg>
<div style="left:396px;top:372px;width:0.7px;height:8px;background:#2e2e2e;"></div>
<div style="left:400.6px;top:372px;width:34.4px;height:8.5px;background:#1c1c1c;"></div>
<div style="left:403px;top:372.26px;font-size:6.56px;line-height:7.87px;color:#a0a0a0;font-weight:normal;font-family:'Liberation Sans',sans-serif;transform:scaleX(0.9);transform-origin:0 50%;">0:00:01:04</div>
<div style="left:911px;top:40px;width:113px;height:341px;background:#232323;"></div>
<div style="left:917.6px;top:44.1px;font-size:6.33px;line-height:7.6px;color:#707070;font-weight:normal;font-family:'Liberation Sans',sans-serif;transform:scaleX(0.9);transform-origin:0 50%;">Preview</div>
<div style="left:911px;top:54.4px;width:107px;height:1.4px;background:#1c1c1c;"></div>
<div style="left:917.6px;top:60.03px;font-size:6.28px;line-height:7.54px;color:#b8b8b8;font-weight:normal;font-family:'Liberation Sans',sans-serif;transform:scaleX(0.9);transform-origin:0 50%;">Effects &amp; Presets</div>
<svg style="position:absolute;left:1008px;top:61.3px;" width="4.5" height="5" viewBox="0 0 4.5 5"><path d="M0 0.7H4M0 2.4H4M0 4.1H4" stroke="#9a9a9a" stroke-width="0.8"/></svg>
<div style="left:914.3px;top:72.7px;width:100.5px;height:8.5px;background:#171717;"></div>
<svg style="position:absolute;left:916px;top:73.8px;" width="10" height="6.5" viewBox="0 0 10 6.5"><circle cx="6" cy="2.6" r="2" fill="none" stroke="#2d8ceb" stroke-width="0.9"/><path d="M4.6 4L2.4 6.2" stroke="#2d8ceb" stroke-width="1"/><path d="M7.3 5H9.5L8.4 6.2Z" fill="#2d8ceb"/></svg>
<div style="left:927.6px;top:73.47px;font-size:6.22px;line-height:7.46px;color:#c8c8c8;font-weight:normal;font-family:'Liberation Sans',sans-serif;transform:scaleX(0.9);transform-origin:0 50%;">gau</div>
<svg style="position:absolute;left:1008.8px;top:74.5px;" width="5" height="5" viewBox="0 0 5 5"><path d="M0.5 0.5L4.5 4.5M4.5 0.5L0.5 4.5" stroke="#e0e0e0" stroke-width="1"/></svg>
<svg style="position:absolute;left:914.5px;top:86.3px;" width="4" height="3" viewBox="0 0 4 3"><path d="M0.3 0.5L2 2.2L3.7 0.5" stroke="#8a8a8a" stroke-width="0.6" fill="none"/></svg>
<div style="left:919.5px;top:84.27px;font-size:6.22px;line-height:7.46px;color:#8a8a8a;font-weight:normal;font-family:'Liberation Sans',sans-serif;transform:scaleX(0.9);transform-origin:0 50%;">Blur &amp; Sharpen</div>
<div style="left:929.2px;top:94px;width:5.5px;height:5px;background:#c0c0c0;border-radius:0.5px;"></div>
<div style="left:930.2px;top:95.6px;width:1.3px;height:2.6px;background:#232323;"></div>
<div style="left:932.4000000000001px;top:95.6px;width:1.3px;height:2.6px;background:#232323;"></div>
<div style="left:937.5px;top:94px;width:5.5px;height:5px;background:#c0c0c0;border-radius:0.5px;"></div>
<div style="left:938.5px;top:95.6px;width:1.3px;height:2.6px;background:#232323;"></div>
<div style="left:940.7px;top:95.6px;width:1.3px;height:2.6px;background:#232323;"></div>
<div style="left:947.5px;top:93.13px;font-size:6.11px;line-height:7.33px;color:#a0a0a0;font-weight:normal;font-family:'Liberation Sans',sans-serif;transform:scaleX(0.9);transform-origin:0 50%;">Gaussian Blur</div>
<svg style="position:absolute;left:914.5px;top:103.8px;" width="4" height="3" viewBox="0 0 4 3"><path d="M0.3 0.5L2 2.2L3.7 0.5" stroke="#8a8a8a" stroke-width="0.6" fill="none"/></svg>
<div style="left:919.5px;top:101.47px;font-size:6.22px;line-height:7.46px;color:#8a8a8a;font-weight:normal;font-family:'Liberation Sans',sans-serif;transform:scaleX(0.9);transform-origin:0 50%;">Obsolete</div>
<div style="left:929.2px;top:111.3px;width:5.5px;height:5px;background:#c0c0c0;border-radius:0.5px;"></div>
<div style="left:930.2px;top:112.89999999999999px;width:1.3px;height:2.6px;background:#232323;"></div>
<div style="left:932.4000000000001px;top:112.89999999999999px;width:1.3px;height:2.6px;background:#232323;"></div>
<div style="left:938.5px;top:110.16px;font-size:6.06px;line-height:7.27px;color:#a0a0a0;font-weight:normal;font-family:'Liberation Sans',sans-serif;transform:scaleX(0.9);transform-origin:0 50%;">Gaussian Blur (Legacy)</div>
<div style="left:1009px;top:120.8px;width:6px;height:6px;background:#c8c8c8;border-radius:0.5px;"></div>
<div style="left:911px;top:129.6px;width:107px;height:1.2px;background:#1c1c1c;"></div>
<div style="left:911px;top:131.1px;width:107px;height:14.4px;background:#252525;"></div>
<div style="left:911px;top:145.5px;width:107px;height:1.25px;background:#1c1c1c;"></div>
<div style="left:917.7px;top:133.83px;font-size:6.44px;line-height:7.73px;color:#858585;font-weight:normal;font-family:'Liberation Sans',sans-serif;transform:scaleX(0.9);transform-origin:0 50%;">Align</div>
<div style="left:911px;top:146.75px;width:107px;height:14.4px;background:#252525;"></div>
<div style="left:911px;top:161.15px;width:107px;height:1.25px;background:#1c1c1c;"></div>
<div style="left:917.7px;top:149.48px;font-size:6.44px;line-height:7.73px;color:#858585;font-weight:normal;font-family:'Liberation Sans',sans-serif;transform:scaleX(0.9);transform-origin:0 50%;">Character</div>
<div style="left:911px;top:162.4px;width:107px;height:14.4px;background:#252525;"></div>
<div style="left:911px;top:176.8px;width:107px;height:1.25px;background:#1c1c1c;"></div>
<div style="left:917.7px;top:165.13px;font-size:6.44px;line-height:7.73px;color:#858585;font-weight:normal;font-family:'Liberation Sans',sans-serif;transform:scaleX(0.9);transform-origin:0 50%;">Paragraph</div>
<div style="left:911px;top:178.05px;width:107px;height:14.4px;background:#252525;"></div>
<div style="left:911px;top:192.45000000000002px;width:107px;height:1.25px;background:#1c1c1c;"></div>
<div style="left:917.7px;top:180.78px;font-size:6.44px;line-height:7.73px;color:#858585;font-weight:normal;font-family:'Liberation Sans',sans-serif;transform:scaleX(0.9);transform-origin:0 50%;">Tracker</div>
<div style="left:911px;top:193.7px;width:107px;height:14.4px;background:#252525;"></div>
<div style="left:911px;top:208.1px;width:107px;height:1.25px;background:#1c1c1c;"></div>
<div style="left:917.7px;top:196.43px;font-size:6.44px;line-height:7.73px;color:#858585;font-weight:normal;font-family:'Liberation Sans',sans-serif;transform:scaleX(0.9);transform-origin:0 50%;">Content-Aware Fill</div>
<div style="left:911px;top:209.35px;width:107px;height:14.4px;background:#252525;"></div>
<div style="left:911px;top:223.75px;width:107px;height:1.25px;background:#1c1c1c;"></div>
<div style="left:917.7px;top:212.08px;font-size:6.44px;line-height:7.73px;color:#858585;font-weight:normal;font-family:'Liberation Sans',sans-serif;transform:scaleX(0.9);transform-origin:0 50%;">Wiggler</div>
<div style="left:0px;top:383.6px;width:1024px;height:191.4px;background:#232323;"></div>
<div style="left:0px;top:383.7px;width:1024px;height:1.4px;background:#35506f;"></div>
<div style="left:0px;top:383.7px;width:1.8px;height:191.3px;background:#30486a;"></div>
<div style="left:0px;top:572.8px;width:1024px;height:2.2px;background:#2c3e55;"></div>
<div style="left:1.2px;top:384.6px;width:1022.8px;height:12px;background:#232323;"></div>
<div style="left:14px;top:388.6px;width:5.3px;height:5.2px;background:#c4ad86;"></div>
<div style="left:25.4px;top:387.67px;font-size:6.56px;line-height:7.87px;color:#7c7c7c;font-weight:normal;font-family:'Liberation Sans',sans-serif;transform:scaleX(0.9);transform-origin:0 50%;">Spatial Interpolation</div>
<div style="left:106px;top:388.6px;width:5.3px;height:5.2px;background:#c4ad86;"></div>
<div style="left:117.3px;top:387.67px;font-size:6.56px;line-height:7.87px;color:#7c7c7c;font-weight:normal;font-family:'Liberation Sans',sans-serif;transform:scaleX(0.9);transform-origin:0 50%;">Reposition Anchor Point</div>
<div style="left:207.7px;top:388.6px;width:5.3px;height:5.2px;background:#c4ad86;"></div>
<div style="left:218.9px;top:387.67px;font-size:6.56px;line-height:7.87px;color:#7c7c7c;font-weight:normal;font-family:'Liberation Sans',sans-serif;transform:scaleX(0.9);transform-origin:0 50%;">Reposition Anchor Point with Keyframes</div>
<div style="left:350.5px;top:388.6px;width:5.3px;height:5.2px;background:#c4ad86;"></div>
<div style="left:361.9px;top:387.67px;font-size:6.56px;line-height:7.87px;color:#7c7c7c;font-weight:normal;font-family:'Liberation Sans',sans-serif;transform:scaleX(0.9);transform-origin:0 50%;">Move Layer and Keyframes</div>
<div style="left:461.3px;top:388.6px;width:5.3px;height:5.2px;background:#c4ad86;"></div>
<div style="left:472.5px;top:387.67px;font-size:6.56px;line-height:7.87px;color:#7c7c7c;font-weight:normal;font-family:'Liberation Sans',sans-serif;transform:scaleX(0.9);transform-origin:0 50%;">Blurry Vectors</div>
<div style="left:537.8px;top:388.6px;width:5.3px;height:5.2px;background:#c4ad86;"></div>
<div style="left:548.7px;top:387.67px;font-size:6.56px;line-height:7.87px;color:#7c7c7c;font-weight:normal;font-family:'Liberation Sans',sans-serif;transform:scaleX(0.9);transform-origin:0 50%;">Centering Anchor Point</div>
<div style="left:636.6px;top:388.6px;width:5.3px;height:5.2px;background:#c4ad86;"></div>
<div style="left:647.4px;top:387.67px;font-size:6.56px;line-height:7.87px;color:#7c7c7c;font-weight:normal;font-family:'Liberation Sans',sans-serif;transform:scaleX(0.9);transform-origin:0 50%;">Moving a group of animated layers</div>
<div style="left:764.5px;top:388.6px;width:5.3px;height:5.2px;background:#c4ad86;"></div>
<div style="left:775.8px;top:387.67px;font-size:6.56px;line-height:7.87px;color:#c8c8c8;font-weight:normal;font-family:'Liberation Sans',sans-serif;transform:scaleX(0.9);transform-origin:0 50%;">Copy with property links</div>
<div style="left:867.9px;top:388.6px;width:5.3px;height:5.2px;background:#c4ad86;"></div>
<div style="left:878.8px;top:387.67px;font-size:6.56px;line-height:7.87px;color:#7c7c7c;font-weight:normal;font-family:'Liberation Sans',sans-serif;transform:scaleX(0.9);transform-origin:0 50%;">Fit to Comp</div>
<div style="left:938.8px;top:388.6px;width:5.3px;height:5.2px;background:#c4ad86;"></div>
<div style="left:950px;top:387.67px;font-size:6.56px;line-height:7.87px;color:#7c7c7c;font-weight:normal;font-family:'Liberation Sans',sans-serif;transform:scaleX(0.9);transform-origin:0 50%;">Accidental double Cli</div>
<div style="left:757.5px;top:387.13px;font-size:6.11px;line-height:7.33px;color:#9a9a9a;font-weight:normal;font-family:'Liberation Sans',sans-serif;transform:scaleX(0.9);transform-origin:0 50%;">×</div>
<svg style="position:absolute;left:844.7px;top:388.8px;" width="4.5" height="5" viewBox="0 0 4.5 5"><path d="M0 0.7H4M0 2.4H4M0 4.1H4" stroke="#9a9a9a" stroke-width="0.8"/></svg>
<div style="left:757px;top:396px;width:92px;height:1.2px;background:#9a9a9a;"></div>
<svg style="position:absolute;left:1016.5px;top:389px;" width="7" height="5" viewBox="0 0 7 5"><path d="M0.5 0.5L2.5 2.5L0.5 4.5M3.5 0.5L5.5 2.5L3.5 4.5" stroke="#d0d0d0" stroke-width="0.9" fill="none"/></svg>
<div style="left:9.5px;top:398.6px;font-size:8.67px;line-height:10.4px;color:#2d8ceb;font-weight:bold;font-family:'Liberation Sans',sans-serif;transform:scaleX(0.9);transform-origin:0 50%;">0:00:01:04</div>
<div style="left:5.7px;top:408.74px;font-size:5.44px;line-height:6.53px;color:#285d98;font-weight:normal;font-family:'Liberation Sans',sans-serif;transform:scaleX(0.9);transform-origin:0 50%;">00028 (23.976 fps)</div>
<div style="left:59.3px;top:402.9px;width:291.2px;height:8.8px;background:#171717;"></div>
<svg style="position:absolute;left:63px;top:404px;" width="9" height="7" viewBox="0 0 9 7"><circle cx="4.2" cy="2.7" r="2" fill="none" stroke="#c8c8c8" stroke-width="0.8"/><path d="M2.8 4.2L0.8 6.2" stroke="#c8c8c8" stroke-width="0.9"/><path d="M6 5.2H8L7 6.3Z" fill="#c8c8c8"/></svg>
<svg style="position:absolute;left:359px;top:403.5px;" width="10" height="8" viewBox="0 0 10 8"><path d="M0.5 2H6M3 2V6H8M6 4L8 6L6 8" stroke="#cfcfcf" stroke-width="0.9" fill="none"/></svg>
<svg style="position:absolute;left:377px;top:403.5px;" width="9" height="8" viewBox="0 0 9 8"><path d="M0.5 6.5H8.5M1.5 6Q1.5 1 4.5 1Q7.5 1 7.5 6" fill="#cfcfcf"/><path d="M4.5 1V6" stroke="#232323" stroke-width="0.6"/></svg>
<svg style="position:absolute;left:391px;top:403.3px;" width="8" height="8" viewBox="0 0 8 8"><rect x="2.5" y="0.5" width="5" height="5" fill="#cfcfcf"/><rect x="0.5" y="2.5" width="5" height="5" fill="#cfcfcf" stroke="#232323" stroke-width="0.6"/></svg>
<svg style="position:absolute;left:403.8px;top:403.5px;" width="9" height="8" viewBox="0 0 9 8"><circle cx="2.7" cy="5" r="2.3" fill="none" stroke="#cfcfcf" stroke-width="1"/><circle cx="6.3" cy="3" r="2.3" fill="#cfcfcf"/></svg>
<svg style="position:absolute;left:421.6px;top:403.5px;" width="9" height="8" viewBox="0 0 9 8"><rect x="0.5" y="0.5" width="8" height="7" fill="none" stroke="#cfcfcf" stroke-width="0.9"/><path d="M2 2L6.5 6" stroke="#cfcfcf" stroke-width="0.9"/></svg>
<div style="left:1.2px;top:416.7px;width:435.6px;height:0.8px;background:#1a1a1a;"></div>
<div style="left:1.2px;top:417.5px;width:435.6px;height:9.2px;background:#2a2a2a;"></div>
<div style="left:1.2px;top:426.4px;width:435.6px;height:1px;background:#1c1c1c;"></div>
<div style="left:3.6px;top:418.33px;font-size:6.11px;line-height:7.33px;color:#cfcfcf;font-weight:normal;font-family:'Liberation Sans',sans-serif;transform:scaleX(0.9);transform-origin:0 50%;">◉</div>
<div style="left:11.4px;top:419.5px;width:5px;height:5px;background:#cfcfcf;border-radius:2.5px 0 0 2.5px;"></div>
<div style="left:20.3px;top:420px;width:3.8px;height:3.8px;background:#cfcfcf;border-radius:2px;"></div>
<svg style="position:absolute;left:27.4px;top:418.8px;" width="6" height="7" viewBox="0 0 6 7"><rect x="0.5" y="2.8" width="5" height="3.7" fill="#cfcfcf"/><path d="M1.5 3V1.8Q1.5 0.5 3 0.5Q4.5 0.5 4.5 1.8V3" fill="none" stroke="#cfcfcf" stroke-width="0.8"/></svg>
<div style="left:36.8px;top:417.5px;width:0.6px;height:9.2px;background:#1c1c1c;"></div>
<svg style="position:absolute;left:43px;top:418.5px;" width="7" height="7" viewBox="0 0 7 7"><path d="M0.5 0.5H3.5L6.5 3.5L3.5 6.5L0.5 3.5Z" fill="#cfcfcf"/><circle cx="2" cy="2" r="0.7" fill="#262626"/></svg>
<div style="left:52px;top:417.5px;width:0.6px;height:9.2px;background:#1c1c1c;"></div>
<div style="left:56px;top:419.3px;font-size:5.0px;line-height:6.0px;color:#8a8a8a;font-weight:normal;font-family:'Liberation Sans',sans-serif;transform:scaleX(0.9);transform-origin:0 50%;">#</div>
<div style="left:68.6px;top:417.5px;width:0.6px;height:9.2px;background:#1c1c1c;"></div>
<div style="left:72.4px;top:418.66px;font-size:5.89px;line-height:7.07px;color:#6e6e6e;font-weight:normal;font-family:'Liberation Sans',sans-serif;transform:scaleX(0.9);transform-origin:0 50%;">Source Name</div>
<div style="left:281px;top:417.5px;width:0.6px;height:9.2px;background:#1c1c1c;"></div>
<div style="left:286.3px;top:418.56px;font-size:5.89px;line-height:7.07px;color:#6e6e6e;font-weight:normal;font-family:'Liberation Sans',sans-serif;transform:scaleX(0.9);transform-origin:0 50%;">Mode</div>
<div style="left:326.7px;top:418.56px;font-size:5.89px;line-height:7.07px;color:#6e6e6e;font-weight:normal;font-family:'Liberation Sans',sans-serif;transform:scaleX(0.9);transform-origin:0 50%;">T</div>
<div style="left:334.3px;top:418.56px;font-size:5.89px;line-height:7.07px;color:#6e6e6e;font-weight:normal;font-family:'Liberation Sans',sans-serif;transform:scaleX(0.9);transform-origin:0 50%;">TrkMat</div>
<div style="left:367px;top:417.5px;width:0.6px;height:9.2px;background:#1c1c1c;"></div>
<div style="left:372.7px;top:418.56px;font-size:5.89px;line-height:7.07px;color:#6e6e6e;font-weight:normal;font-family:'Liberation Sans',sans-serif;transform:scaleX(0.9);transform-origin:0 50%;">Parent &amp; Link</div>
<div style="left:430px;top:417.5px;width:0.6px;height:9.2px;background:#1c1c1c;"></div>
<div style="left:1.2px;top:426.6px;width:435.6px;height:8.6px;background:#2b2b2b;"></div>
<div style="left:1.2px;top:435.2px;width:435.6px;height:0.5px;background:#1d1d1d;"></div>
<div style="left:1.2px;top:436.0px;width:435.6px;height:8.6px;background:#232323;"></div>
<div style="left:1.2px;top:444.59999999999997px;width:435.6px;height:0.5px;background:#1d1d1d;"></div>
<div style="left:1.2px;top:444.6px;width:435.6px;height:8.6px;background:#232323;"></div>
<div style="left:1.2px;top:453.2px;width:435.6px;height:0.5px;background:#1d1d1d;"></div>
<div style="left:1.2px;top:453.40000000000003px;width:435.6px;height:8.6px;background:#2b2b2b;"></div>
<div style="left:1.2px;top:462.0px;width:435.6px;height:0.5px;background:#1d1d1d;"></div>
<div style="left:1.2px;top:462.6px;width:435.6px;height:8.6px;background:#232323;"></div>
<div style="left:1.2px;top:471.2px;width:435.6px;height:0.5px;background:#1d1d1d;"></div>
<div style="left:1.2px;top:471.0px;width:435.6px;height:8.6px;background:#2b2b2b;"></div>
<div style="left:1.2px;top:479.59999999999997px;width:435.6px;height:0.5px;background:#1d1d1d;"></div>
<div style="left:1.2px;top:479.90000000000003px;width:435.6px;height:8.6px;background:#232323;"></div>
<div style="left:1.2px;top:488.5px;width:435.6px;height:0.5px;background:#1d1d1d;"></div>
<div style="left:1.2px;top:488.40000000000003px;width:435.6px;height:8.6px;background:#232323;"></div>
<div style="left:1.2px;top:497.0px;width:435.6px;height:0.5px;background:#1d1d1d;"></div>
<div style="left:4px;top:427.6px;width:6px;height:6.4px;background:#222;"></div>
<div style="left:20.5px;top:427.6px;width:6px;height:6.4px;background:#222;"></div>
<div style="left:28px;top:427.6px;width:6px;height:6.4px;background:#222;"></div>
<svg style="position:absolute;left:39.4px;top:429.3px;" width="4.5" height="3" viewBox="0 0 4.5 3"><path d="M0.3 0.5L2.2 2.4L4.2 0.5" stroke="#8a8a8a" stroke-width="0.6" fill="none"/></svg>
<div style="left:45.2px;top:427.6px;width:6.3px;height:6.3px;background:#6b86f0;"></div>
<div style="left:56px;top:426.94px;font-size:6.44px;line-height:7.73px;color:#c0c0c0;font-weight:normal;font-family:'Liberation Sans',sans-serif;transform:scaleX(0.9);transform-origin:0 50%;">1</div>
<div style="left:71.5px;top:426.6px;font-size:7.0px;line-height:8.4px;color:#d8d8d8;font-weight:normal;font-family:'Liberation Sans',sans-serif;transform:scaleX(0.9);transform-origin:0 50%;">★</div>
<div style="left:80px;top:427.8px;width:6.3px;height:6.2px;background:transparent;border:0.8px solid #c0c0c0;box-sizing:border-box;"></div>
<div style="left:82px;top:429.8px;width:2.3px;height:2.2px;background:#c0c0c0;"></div>
<div style="left:89.4px;top:426.8px;font-size:6.67px;line-height:8.0px;color:#c8c8c8;font-weight:normal;font-family:'Liberation Sans',sans-serif;transform:scaleX(0.9);transform-origin:0 50%;">Shape Layer 2</div>
<div style="left:285.8px;top:427.40000000000003px;width:34.2px;height:6.8px;background:#1b1b1b;"></div>
<div style="left:288.7px;top:426.87px;font-size:6.56px;line-height:7.87px;color:#c0c0c0;font-weight:normal;font-family:'Liberation Sans',sans-serif;transform:scaleX(0.9);transform-origin:0 50%;">Normal</div>
<svg style="position:absolute;left:314.5px;top:429.6px;" width="4" height="3" viewBox="0 0 4 3"><path d="M0.3 0.5L2 2.2L3.7 0.5" stroke="#a8a8a8" stroke-width="0.7" fill="none"/></svg>
<svg style="position:absolute;left:371.8px;top:427.6px;" width="7" height="6.5" viewBox="0 0 7 6.5"><circle cx="3.2" cy="3.3" r="2.6" fill="none" stroke="#c0c0c0" stroke-width="0.9"/><circle cx="3.2" cy="3.3" r="0.9" fill="#c0c0c0"/><path d="M5.5 1.5L6.8 0.5" stroke="#c0c0c0" stroke-width="0.8"/></svg>
<div style="left:382.7px;top:427.40000000000003px;width:44.3px;height:6.8px;background:#1b1b1b;"></div>
<div style="left:385.59999999999997px;top:426.87px;font-size:6.56px;line-height:7.87px;color:#c0c0c0;font-weight:normal;font-family:'Liberation Sans',sans-serif;transform:scaleX(0.9);transform-origin:0 50%;">None</div>
<svg style="position:absolute;left:421.5px;top:429.6px;" width="4" height="3" viewBox="0 0 4 3"><path d="M0.3 0.5L2 2.2L3.7 0.5" stroke="#a8a8a8" stroke-width="0.7" fill="none"/></svg>
<svg style="position:absolute;left:4.5px;top:438.0px;" width="21" height="4.5" viewBox="0 0 21 4.5"><path d="M4 0.3L0.8 2.2L4 4.1Z" fill="#d0d0d0"/><path d="M10 0.3L12 2.2L10 4.1L8 2.2Z" fill="none" stroke="#d0d0d0" stroke-width="0.7"/><path d="M18 0.3L20.5 2.2L18 4.1Z" fill="#707070"/></svg>
<svg style="position:absolute;left:58.4px;top:438.7px;" width="4.5" height="3" viewBox="0 0 4.5 3"><path d="M0.3 0.5L2.2 2.4L4.2 0.5" stroke="#8a8a8a" stroke-width="0.6" fill="none"/></svg>
<svg style="position:absolute;left:63.5px;top:436.59999999999997px;" width="7.4" height="7.6" viewBox="0 0 7.4 7.6"><circle cx="3.7" cy="4.1" r="2.8" fill="none" stroke="#2d8ceb" stroke-width="0.85"/><path d="M3.7 0.3V1.2M3.7 4.1L5.2 2.7" stroke="#2d8ceb" stroke-width="0.8"/></svg>
<svg style="position:absolute;left:73px;top:437.2px;" width="7" height="6" viewBox="0 0 7 6"><path d="M0.5 0.3V5.5H6.5M1.5 4.5L3 2.5L4.3 3.8L6 1.3" stroke="#c8c8c8" stroke-width="0.8" fill="none"/></svg>
<div style="left:83.3px;top:436.13px;font-size:6.78px;line-height:8.14px;color:#b8b8b8;font-weight:normal;font-family:'Liberation Sans',sans-serif;transform:scaleX(0.9);transform-origin:0 50%;">Scale</div>
<div style="left:285.8px;top:437.2px;width:6.7px;height:6px;background:#1d1d1d;"></div>
<div style="left:295px;top:436.5px;font-size:6.17px;line-height:7.4px;color:#c8443b;font-weight:normal;font-family:'Liberation Sans',sans-serif;transform:scaleX(0.9);transform-origin:0 50%;">100.0,100.0</div>
<div style="left:325px;top:436.9px;font-size:5.5px;line-height:6.6px;color:#a0a0a0;">%</div>
<svg style="position:absolute;left:378.5px;top:437.0px;" width="7" height="6.5" viewBox="0 0 7 6.5"><circle cx="3.2" cy="3.3" r="2.6" fill="none" stroke="#c0c0c0" stroke-width="0.9"/><circle cx="3.2" cy="3.3" r="0.9" fill="#c0c0c0"/><path d="M5.5 1.5L6.8 0.5" stroke="#c0c0c0" stroke-width="0.8"/></svg>
<div style="left:74.1px;top:444.87px;font-size:6.56px;line-height:7.87px;color:#8c8c8c;font-weight:normal;font-family:'Liberation Sans',sans-serif;transform:scaleX(0.9);transform-origin:0 50%;">Expression: Scale</div>
<div style="left:296px;top:447.5px;width:5px;height:0.9px;background:#2d8ceb;"></div>
<div style="left:296px;top:449.3px;width:5px;height:0.9px;background:#2d8ceb;"></div>
<svg style="position:absolute;left:304px;top:445.8px;" width="7" height="6" viewBox="0 0 7 6"><path d="M0.5 0.3V5.5H6.5M1.5 4.5L3 2.5L4.3 3.8L6 1.3" stroke="#c8c8c8" stroke-width="0.8" fill="none"/></svg>
<svg style="position:absolute;left:313px;top:445.6px;" width="7" height="6.5" viewBox="0 0 7 6.5"><circle cx="3.2" cy="3.3" r="2.6" fill="none" stroke="#c0c0c0" stroke-width="0.9"/><circle cx="3.2" cy="3.3" r="0.9" fill="#c0c0c0"/><path d="M5.5 1.5L6.8 0.5" stroke="#c0c0c0" stroke-width="0.8"/></svg>
<svg style="position:absolute;left:321.7px;top:445.8px;" width="6" height="6" viewBox="0 0 6 6"><circle cx="3" cy="3" r="2.8" fill="#e0e0e0"/><path d="M2.2 1.6L4.4 3L2.2 4.4Z" fill="#232323"/></svg>
<svg style="position:absolute;left:3.8px;top:455.40000000000003px;" width="6.5" height="4.5" viewBox="0 0 6.5 4.5"><path d="M0.3 2.2Q3.2 -0.8 6.2 2.2Q3.2 5.2 0.3 2.2Z" fill="#d0d0d0"/><circle cx="3.25" cy="2.2" r="1" fill="#2b2b2b"/></svg>
<div style="left:20.5px;top:454.40000000000003px;width:6px;height:6.4px;background:#222;"></div>
<div style="left:28px;top:454.40000000000003px;width:6px;height:6.4px;background:#222;"></div>
<svg style="position:absolute;left:39.4px;top:456.1px;" width="4.5" height="3" viewBox="0 0 4.5 3"><path d="M0.3 0.5L2.2 2.4L4.2 0.5" stroke="#8a8a8a" stroke-width="0.6" fill="none"/></svg>
<div style="left:45.2px;top:454.40000000000003px;width:6.3px;height:6.3px;background:#e0383a;"></div>
<div style="left:56px;top:453.74px;font-size:6.44px;line-height:7.73px;color:#c0c0c0;font-weight:normal;font-family:'Liberation Sans',sans-serif;transform:scaleX(0.9);transform-origin:0 50%;">2</div>
<div style="left:71.2px;top:452.98px;font-size:8.2px;line-height:9.84px;color:#d0d0d0;font-weight:normal;font-family:'Liberation Serif',serif;">T</div>
<div style="left:80px;top:454.6px;width:6.3px;height:6.2px;background:transparent;border:0.8px solid #c0c0c0;box-sizing:border-box;"></div>
<div style="left:89.8px;top:453.6px;font-size:6.67px;line-height:8.0px;color:#d0d0d0;font-weight:bold;font-family:'Liberation Sans',sans-serif;transform:scaleX(0.78);transform-origin:0 50%;">HELLO</div>
<div style="left:285.8px;top:454.20000000000005px;width:34.2px;height:6.8px;background:#1b1b1b;"></div>
<div style="left:288.7px;top:453.67px;font-size:6.56px;line-height:7.87px;color:#c0c0c0;font-weight:normal;font-family:'Liberation Sans',sans-serif;transform:scaleX(0.9);transform-origin:0 50%;">Normal</div>
<svg style="position:absolute;left:314.5px;top:456.40000000000003px;" width="4" height="3" viewBox="0 0 4 3"><path d="M0.3 0.5L2 2.2L3.7 0.5" stroke="#a8a8a8" stroke-width="0.7" fill="none"/></svg>
<div style="left:323.7px;top:454.20000000000005px;width:7.3px;height:6.8px;background:#1f1f1f;"></div>
<div style="left:333.8px;top:454.20000000000005px;width:32.2px;height:6.8px;background:#1b1b1b;"></div>
<div style="left:336.7px;top:453.67px;font-size:6.56px;line-height:7.87px;color:#c0c0c0;font-weight:normal;font-family:'Liberation Sans',sans-serif;transform:scaleX(0.9);transform-origin:0 50%;">Alpha</div>
<svg style="position:absolute;left:360.5px;top:456.40000000000003px;" width="4" height="3" viewBox="0 0 4 3"><path d="M0.3 0.5L2 2.2L3.7 0.5" stroke="#a8a8a8" stroke-width="0.7" fill="none"/></svg>
<svg style="position:absolute;left:371.5px;top:454.40000000000003px;" width="7" height="6.5" viewBox="0 0 7 6.5"><circle cx="3.2" cy="3.3" r="2.6" fill="none" stroke="#c0c0c0" stroke-width="0.9"/><circle cx="3.2" cy="3.3" r="0.9" fill="#c0c0c0"/><path d="M5.5 1.5L6.8 0.5" stroke="#c0c0c0" stroke-width="0.8"/></svg>
<div style="left:382.7px;top:454.20000000000005px;width:44.3px;height:6.8px;background:#1b1b1b;"></div>
<div style="left:385.59999999999997px;top:453.67px;font-size:6.56px;line-height:7.87px;color:#c0c0c0;font-weight:normal;font-family:'Liberation Sans',sans-serif;transform:scaleX(0.9);transform-origin:0 50%;">None</div>
<svg style="position:absolute;left:421.5px;top:456.40000000000003px;" width="4" height="3" viewBox="0 0 4 3"><path d="M0.3 0.5L2 2.2L3.7 0.5" stroke="#a8a8a8" stroke-width="0.7" fill="none"/></svg>
<svg style="position:absolute;left:63.5px;top:463.2px;" width="7.4" height="7.6" viewBox="0 0 7.4 7.6"><circle cx="3.7" cy="4.1" r="2.8" fill="none" stroke="#d0d0d0" stroke-width="0.85"/><path d="M3.7 0.3V1.2M3.7 4.1L5.2 2.7" stroke="#d0d0d0" stroke-width="0.8"/></svg>
<div style="left:73.6px;top:462.73px;font-size:6.78px;line-height:8.14px;color:#b8b8b8;font-weight:normal;font-family:'Liberation Sans',sans-serif;transform:scaleX(0.9);transform-origin:0 50%;">Scale</div>
<svg style="position:absolute;left:285.8px;top:464.8px;" width="7" height="4" viewBox="0 0 7 4"><path d="M2 0.5H3M4 0.5H5A1.5 1.5 0 0 1 5 3.5H4M3 3.5H2A1.5 1.5 0 0 1 2 0.5M2 2H5" stroke="#c0c0c0" stroke-width="0.8" fill="none"/></svg>
<div style="left:295px;top:463.1px;font-size:6.17px;line-height:7.4px;color:#2d8ceb;font-weight:normal;font-family:'Liberation Sans',sans-serif;transform:scaleX(0.9);transform-origin:0 50%;">128.0,128.0</div>
<div style="left:325px;top:463.5px;font-size:5.5px;line-height:6.6px;color:#a0a0a0;">%</div>
<svg style="position:absolute;left:378.5px;top:463.6px;" width="7" height="6.5" viewBox="0 0 7 6.5"><circle cx="3.2" cy="3.3" r="2.6" fill="none" stroke="#c0c0c0" stroke-width="0.9"/><circle cx="3.2" cy="3.3" r="0.9" fill="#c0c0c0"/><path d="M5.5 1.5L6.8 0.5" stroke="#c0c0c0" stroke-width="0.8"/></svg>
<svg style="position:absolute;left:3.8px;top:473.0px;" width="6.5" height="4.5" viewBox="0 0 6.5 4.5"><path d="M0.3 2.2Q3.2 -0.8 6.2 2.2Q3.2 5.2 0.3 2.2Z" fill="#d0d0d0"/><circle cx="3.25" cy="2.2" r="1" fill="#2b2b2b"/></svg>
<div style="left:20.5px;top:472.0px;width:6px;height:6.4px;background:#222;"></div>
<div style="left:28px;top:472.0px;width:6px;height:6.4px;background:#222;"></div>
<svg style="position:absolute;left:39.4px;top:473.7px;" width="4.5" height="3" viewBox="0 0 4.5 3"><path d="M0.3 0.5L2.2 2.4L4.2 0.5" stroke="#8a8a8a" stroke-width="0.6" fill="none"/></svg>
<div style="left:45.2px;top:472.0px;width:6.3px;height:6.3px;background:#6b86f0;"></div>
<div style="left:56px;top:471.33px;font-size:6.44px;line-height:7.73px;color:#c0c0c0;font-weight:normal;font-family:'Liberation Sans',sans-serif;transform:scaleX(0.9);transform-origin:0 50%;">3</div>
<div style="left:71.5px;top:471.0px;font-size:7.0px;line-height:8.4px;color:#d8d8d8;font-weight:normal;font-family:'Liberation Sans',sans-serif;transform:scaleX(0.9);transform-origin:0 50%;">★</div>
<div style="left:80.8px;top:471.2px;font-size:6.67px;line-height:8.0px;color:#c8c8c8;font-weight:normal;font-family:'Liberation Sans',sans-serif;transform:scaleX(0.9);transform-origin:0 50%;">Shape Layer 1</div>
<div style="left:285.8px;top:471.8px;width:34.2px;height:6.8px;background:#1b1b1b;"></div>
<div style="left:288.7px;top:471.26px;font-size:6.56px;line-height:7.87px;color:#c0c0c0;font-weight:normal;font-family:'Liberation Sans',sans-serif;transform:scaleX(0.9);transform-origin:0 50%;">Normal</div>
<svg style="position:absolute;left:314.5px;top:474.0px;" width="4" height="3" viewBox="0 0 4 3"><path d="M0.3 0.5L2 2.2L3.7 0.5" stroke="#a8a8a8" stroke-width="0.7" fill="none"/></svg>
<div style="left:323.7px;top:471.8px;width:7.3px;height:6.8px;background:#1f1f1f;"></div>
<div style="left:333.8px;top:471.8px;width:32.2px;height:6.8px;background:#1b1b1b;"></div>
<div style="left:336.7px;top:471.26px;font-size:6.56px;line-height:7.87px;color:#c0c0c0;font-weight:normal;font-family:'Liberation Sans',sans-serif;transform:scaleX(0.9);transform-origin:0 50%;">None</div>
<svg style="position:absolute;left:360.5px;top:474.0px;" width="4" height="3" viewBox="0 0 4 3"><path d="M0.3 0.5L2 2.2L3.7 0.5" stroke="#a8a8a8" stroke-width="0.7" fill="none"/></svg>
<svg style="position:absolute;left:371.5px;top:472.0px;" width="7" height="6.5" viewBox="0 0 7 6.5"><circle cx="3.2" cy="3.3" r="2.6" fill="none" stroke="#c0c0c0" stroke-width="0.9"/><circle cx="3.2" cy="3.3" r="0.9" fill="#c0c0c0"/><path d="M5.5 1.5L6.8 0.5" stroke="#c0c0c0" stroke-width="0.8"/></svg>
<div style="left:382.7px;top:471.8px;width:44.3px;height:6.8px;background:#1b1b1b;"></div>
<div style="left:385.59999999999997px;top:471.26px;font-size:6.56px;line-height:7.87px;color:#c0c0c0;font-weight:normal;font-family:'Liberation Sans',sans-serif;transform:scaleX(0.9);transform-origin:0 50%;">None</div>
<svg style="position:absolute;left:421.5px;top:474.0px;" width="4" height="3" viewBox="0 0 4 3"><path d="M0.3 0.5L2 2.2L3.7 0.5" stroke="#a8a8a8" stroke-width="0.7" fill="none"/></svg>
<svg style="position:absolute;left:4.5px;top:481.90000000000003px;" width="21" height="4.5" viewBox="0 0 21 4.5"><path d="M4 0.3L0.8 2.2L4 4.1Z" fill="#d0d0d0"/><path d="M10 0.3L12 2.2L10 4.1L8 2.2Z" fill="none" stroke="#d0d0d0" stroke-width="0.7"/><path d="M18 0.3L20.5 2.2L18 4.1Z" fill="#707070"/></svg>
<svg style="position:absolute;left:63.5px;top:480.5px;" width="7.4" height="7.6" viewBox="0 0 7.4 7.6"><circle cx="3.7" cy="4.1" r="2.8" fill="none" stroke="#2d8ceb" stroke-width="0.85"/><path d="M3.7 0.3V1.2M3.7 4.1L5.2 2.7" stroke="#2d8ceb" stroke-width="0.8"/></svg>
<svg style="position:absolute;left:73px;top:481.1px;" width="7" height="6" viewBox="0 0 7 6"><path d="M0.5 0.3V5.5H6.5M1.5 4.5L3 2.5L4.3 3.8L6 1.3" stroke="#c8c8c8" stroke-width="0.8" fill="none"/></svg>
<div style="left:83.3px;top:480.03px;font-size:6.78px;line-height:8.14px;color:#b8b8b8;font-weight:normal;font-family:'Liberation Sans',sans-serif;transform:scaleX(0.9);transform-origin:0 50%;">Position</div>
<div style="left:285.8px;top:480.3px;font-size:6.33px;line-height:7.6px;color:#2d8ceb;font-weight:normal;font-family:'Liberation Sans',sans-serif;transform:scaleX(0.9);transform-origin:0 50%;">533.0,550.0</div>
<svg style="position:absolute;left:378.5px;top:480.90000000000003px;" width="7" height="6.5" viewBox="0 0 7 6.5"><circle cx="3.2" cy="3.3" r="2.6" fill="none" stroke="#c0c0c0" stroke-width="0.9"/><circle cx="3.2" cy="3.3" r="0.9" fill="#c0c0c0"/><path d="M5.5 1.5L6.8 0.5" stroke="#c0c0c0" stroke-width="0.8"/></svg>
<svg style="position:absolute;left:4.5px;top:490.40000000000003px;" width="21" height="4.5" viewBox="0 0 21 4.5"><path d="M4 0.3L0.8 2.2L4 4.1Z" fill="#d0d0d0"/><path d="M10 0.3L12 2.2L10 4.1L8 2.2Z" fill="none" stroke="#d0d0d0" stroke-width="0.7"/><path d="M18 0.3L20.5 2.2L18 4.1Z" fill="#707070"/></svg>
<svg style="position:absolute;left:63.5px;top:489.0px;" width="7.4" height="7.6" viewBox="0 0 7.4 7.6"><circle cx="3.7" cy="4.1" r="2.8" fill="none" stroke="#2d8ceb" stroke-width="0.85"/><path d="M3.7 0.3V1.2M3.7 4.1L5.2 2.7" stroke="#2d8ceb" stroke-width="0.8"/></svg>
<svg style="position:absolute;left:73px;top:489.6px;" width="7" height="6" viewBox="0 0 7 6"><path d="M0.5 0.3V5.5H6.5M1.5 4.5L3 2.5L4.3 3.8L6 1.3" stroke="#c8c8c8" stroke-width="0.8" fill="none"/></svg>
<div style="left:83.3px;top:488.53px;font-size:6.78px;line-height:8.14px;color:#b8b8b8;font-weight:normal;font-family:'Liberation Sans',sans-serif;transform:scaleX(0.9);transform-origin:0 50%;">Scale</div>
<div style="left:285.8px;top:489.6px;width:6.7px;height:6px;background:#1d1d1d;"></div>
<div style="left:295px;top:488.9px;font-size:6.17px;line-height:7.4px;color:#2d8ceb;font-weight:normal;font-family:'Liberation Sans',sans-serif;transform:scaleX(0.9);transform-origin:0 50%;">100.0,100.0</div>
<div style="left:325px;top:489.3px;font-size:5.5px;line-height:6.6px;color:#a0a0a0;">%</div>
<svg style="position:absolute;left:378.5px;top:489.40000000000003px;" width="7" height="6.5" viewBox="0 0 7 6.5"><circle cx="3.2" cy="3.3" r="2.6" fill="none" stroke="#c0c0c0" stroke-width="0.9"/><circle cx="3.2" cy="3.3" r="0.9" fill="#c0c0c0"/><path d="M5.5 1.5L6.8 0.5" stroke="#c0c0c0" stroke-width="0.8"/></svg>
<div style="left:436.8px;top:397px;width:5px;height:168.4px;background:#222222;"></div>
<div style="left:437.3px;top:397px;width:1.8px;height:168.4px;background:#1a1a1a;"></div>
<div style="left:441.8px;top:397px;width:569.7px;height:167px;background:#303030;"></div>
<div style="left:441.8px;top:397px;width:569.7px;height:19.5px;background:#232323;"></div>
<div style="left:440px;top:401.5px;width:571.5px;height:3.8px;background:#6e6e6e;"></div>
<div style="left:438.8px;top:400.8px;width:2.4px;height:5px;background:#2d8ceb;border-radius:1px;"></div>
<div style="left:1011.5px;top:400.8px;width:3px;height:5px;background:#2d8ceb;border-radius:1px;"></div>
<div style="left:438.8px;top:408px;width:14px;height:6px;overflow:hidden;"><div style="position:absolute;left:-2.3px;top:0;font-size:4.9px;line-height:5.9px;color:#a8a8a8;-webkit-text-stroke:0.1px currentColor;">0:00f</div></div>
<div style="left:442.2px;top:413.5px;width:0.6px;height:2.8px;background:#7a7a7a;"></div>
<div style="left:455.67px;width:30px;text-align:center;top:408px;font-size:4.9px;line-height:5.9px;color:#a8a8a8;">00:12f</div>
<div style="left:470.66999999999996px;top:413.5px;width:0.6px;height:2.8px;background:#7a7a7a;"></div>
<div style="left:484.14px;width:30px;text-align:center;top:408px;font-size:4.9px;line-height:5.9px;color:#a8a8a8;">01:00f</div>
<div style="left:499.14px;top:413.5px;width:0.6px;height:2.8px;background:#7a7a7a;"></div>
<div style="left:512.61px;width:30px;text-align:center;top:408px;font-size:4.9px;line-height:5.9px;color:#a8a8a8;">01:12f</div>
<div style="left:527.61px;top:413.5px;width:0.6px;height:2.8px;background:#7a7a7a;"></div>
<div style="left:541.08px;width:30px;text-align:center;top:408px;font-size:4.9px;line-height:5.9px;color:#a8a8a8;">02:00f</div>
<div style="left:556.0799999999999px;top:413.5px;width:0.6px;height:2.8px;background:#7a7a7a;"></div>
<div style="left:569.55px;width:30px;text-align:center;top:408px;font-size:4.9px;line-height:5.9px;color:#a8a8a8;">02:12f</div>
<div style="left:584.55px;top:413.5px;width:0.6px;height:2.8px;background:#7a7a7a;"></div>
<div style="left:598.02px;width:30px;text-align:center;top:408px;font-size:4.9px;line-height:5.9px;color:#a8a8a8;">03:00f</div>
<div style="left:613.02px;top:413.5px;width:0.6px;height:2.8px;background:#7a7a7a;"></div>
<div style="left:626.49px;width:30px;text-align:center;top:408px;font-size:4.9px;line-height:5.9px;color:#a8a8a8;">03:12f</div>
<div style="left:641.49px;top:413.5px;width:0.6px;height:2.8px;background:#7a7a7a;"></div>
<div style="left:654.96px;width:30px;text-align:center;top:408px;font-size:4.9px;line-height:5.9px;color:#a8a8a8;">04:00f</div>
<div style="left:669.96px;top:413.5px;width:0.6px;height:2.8px;background:#7a7a7a;"></div>
<div style="left:683.43px;width:30px;text-align:center;top:408px;font-size:4.9px;line-height:5.9px;color:#a8a8a8;">04:12f</div>
<div style="left:698.4300000000001px;top:413.5px;width:0.6px;height:2.8px;background:#7a7a7a;"></div>
<div style="left:711.90px;width:30px;text-align:center;top:408px;font-size:4.9px;line-height:5.9px;color:#a8a8a8;">05:00f</div>
<div style="left:726.9px;top:413.5px;width:0.6px;height:2.8px;background:#7a7a7a;"></div>
<div style="left:740.37px;width:30px;text-align:center;top:408px;font-size:4.9px;line-height:5.9px;color:#a8a8a8;">05:12f</div>
<div style="left:755.3699999999999px;top:413.5px;width:0.6px;height:2.8px;background:#7a7a7a;"></div>
<div style="left:768.84px;width:30px;text-align:center;top:408px;font-size:4.9px;line-height:5.9px;color:#a8a8a8;">06:00f</div>
<div style="left:783.8399999999999px;top:413.5px;width:0.6px;height:2.8px;background:#7a7a7a;"></div>
<div style="left:797.31px;width:30px;text-align:center;top:408px;font-size:4.9px;line-height:5.9px;color:#a8a8a8;">06:12f</div>
<div style="left:812.31px;top:413.5px;width:0.6px;height:2.8px;background:#7a7a7a;"></div>
<div style="left:825.78px;width:30px;text-align:center;top:408px;font-size:4.9px;line-height:5.9px;color:#a8a8a8;">07:00f</div>
<div style="left:840.78px;top:413.5px;width:0.6px;height:2.8px;background:#7a7a7a;"></div>
<div style="left:854.25px;width:30px;text-align:center;top:408px;font-size:4.9px;line-height:5.9px;color:#a8a8a8;">07:12f</div>
<div style="left:869.25px;top:413.5px;width:0.6px;height:2.8px;background:#7a7a7a;"></div>
<div style="left:882.72px;width:30px;text-align:center;top:408px;font-size:4.9px;line-height:5.9px;color:#a8a8a8;">08:00f</div>
<div style="left:897.72px;top:413.5px;width:0.6px;height:2.8px;background:#7a7a7a;"></div>
<div style="left:911.19px;width:30px;text-align:center;top:408px;font-size:4.9px;line-height:5.9px;color:#a8a8a8;">08:12f</div>
<div style="left:926.19px;top:413.5px;width:0.6px;height:2.8px;background:#7a7a7a;"></div>
<div style="left:939.66px;width:30px;text-align:center;top:408px;font-size:4.9px;line-height:5.9px;color:#a8a8a8;">09:00f</div>
<div style="left:954.6600000000001px;top:413.5px;width:0.6px;height:2.8px;background:#7a7a7a;"></div>
<div style="left:968.13px;width:30px;text-align:center;top:408px;font-size:4.9px;line-height:5.9px;color:#a8a8a8;">09:12f</div>
<div style="left:983.1299999999999px;top:413.5px;width:0.6px;height:2.8px;background:#7a7a7a;"></div>
<div style="left:996.60px;width:30px;text-align:center;top:408px;font-size:4.9px;line-height:5.9px;color:#a8a8a8;">10:0</div>
<div style="left:1011.5999999999999px;top:413.5px;width:0.6px;height:2.8px;background:#7a7a7a;"></div>
<div style="left:441.8px;top:416.4px;width:569.7px;height:7.8px;background:#6e6e6e;"></div>
<div style="left:439.4px;top:416.4px;width:2.6px;height:7.8px;background:#2d8ceb;border-radius:1px;"></div>
<div style="left:1011.5px;top:416.4px;width:3px;height:7.8px;background:#2d8ceb;border-radius:1px;"></div>
<div style="left:441.8px;top:424.2px;width:569.7px;height:2.3px;background:#19a319;"></div>
<svg style="position:absolute;left:446px;top:424.5px;" width="4" height="3" viewBox="0 0 4 3"><path d="M0 0H4L2 2.5Z" fill="#1a1a8a"/></svg>
<div style="left:441.8px;top:426.7px;width:569.7px;height:8.400000000000034px;background:#2b2b2b;"></div>
<div style="left:441.8px;top:427.09999999999997px;width:569.7px;height:7.600000000000034px;background:#56629c;"></div>
<div style="left:441.8px;top:434.70000000000005px;width:569.7px;height:0.5px;background:#222;"></div>
<div style="left:441.8px;top:435.1px;width:569.7px;height:9.099999999999966px;background:#2e2e2e;"></div>
<div style="left:441.8px;top:443.8px;width:569.7px;height:0.5px;background:#222;"></div>
<div style="left:441.8px;top:444.2px;width:569.7px;height:8.600000000000023px;background:#272727;"></div>
<div style="left:441.8px;top:452.40000000000003px;width:569.7px;height:0.5px;background:#222;"></div>
<div style="left:441.8px;top:452.8px;width:569.7px;height:8.5px;background:#2b2b2b;"></div>
<div style="left:441.8px;top:453.2px;width:569.7px;height:7.7px;background:#8b4541;"></div>
<div style="left:441.8px;top:460.90000000000003px;width:569.7px;height:0.5px;background:#222;"></div>
<div style="left:441.8px;top:461.3px;width:569.7px;height:9.5px;background:#2e2e2e;"></div>
<div style="left:441.8px;top:470.40000000000003px;width:569.7px;height:0.5px;background:#222;"></div>
<div style="left:441.8px;top:470.8px;width:569.7px;height:8.5px;background:#2b2b2b;"></div>
<div style="left:441.8px;top:471.2px;width:569.7px;height:7.7px;background:#56629c;"></div>
<div style="left:441.8px;top:478.90000000000003px;width:569.7px;height:0.5px;background:#222;"></div>
<div style="left:441.8px;top:479.3px;width:569.7px;height:8.899999999999977px;background:#2e2e2e;"></div>
<div style="left:441.8px;top:487.8px;width:569.7px;height:0.5px;background:#222;"></div>
<div style="left:441.8px;top:488.2px;width:569.7px;height:8.400000000000034px;background:#2a2a2a;"></div>
<div style="left:441.8px;top:496.20000000000005px;width:569.7px;height:0.5px;background:#222;"></div>
<svg style="position:absolute;left:444.8px;top:437px;" width="5" height="6" viewBox="0 0 5 6"><path d="M0.3 0.3H4.7L2.5 3L4.7 5.7H0.3L2.5 3Z" fill="#d8d8d8"/></svg>
<svg style="position:absolute;left:503.2px;top:437px;" width="5" height="6" viewBox="0 0 5 6"><path d="M0.3 0.3H4.7L2.5 3L4.7 5.7H0.3L2.5 3Z" fill="#d8d8d8"/></svg>
<svg style="position:absolute;left:449.5px;top:480.8px;" width="5" height="6" viewBox="0 0 5 6"><path d="M0.3 0.3H4.7L2.5 3L4.7 5.7H0.3L2.5 3Z" fill="#d8d8d8"/></svg>
<svg style="position:absolute;left:487.5px;top:480.8px;" width="5" height="6" viewBox="0 0 5 6"><path d="M0.3 0.3H4.7L2.5 3L4.7 5.7H0.3L2.5 3Z" fill="#d8d8d8"/></svg>
<svg style="position:absolute;left:444.8px;top:489.6px;" width="5" height="6" viewBox="0 0 5 6"><path d="M0.3 0.3H4.7L2.5 3L4.7 5.7H0.3L2.5 3Z" fill="#d8d8d8"/></svg>
<svg style="position:absolute;left:480.0px;top:489.6px;" width="5" height="6" viewBox="0 0 5 6"><path d="M0.3 0.3H4.7L2.5 3L4.7 5.7H0.3L2.5 3Z" fill="#d8d8d8"/></svg>
<div style="left:507.5px;top:463.5px;width:1.5px;height:6px;background:#9a9a9a;"></div>
<div style="left:446px;top:446.07px;font-size:6.38px;line-height:7.66px;color:#bdbdbd;font-weight:normal;font-family:'Liberation Mono',monospace;">comp(&quot;Copy with property links&quot;).layer(&quot;Shape Layer 1&quot;).transform.scale</div>
<div style="left:507.6px;top:401.3px;width:1.5px;height:162.7px;background:#2d8ceb;"></div>
<svg style="position:absolute;left:505.2px;top:407.8px;" width="7" height="7.5" viewBox="0 0 7 7.5"><path d="M0.5 0.5H6.5V4L3.5 7L0.5 4Z" fill="#2d8ceb"/></svg>
<div style="left:1011.5px;top:397px;width:12.0px;height:168px;background:#222222;"></div>
<div style="left:1011.5px;top:400.8px;width:3.2px;height:5px;background:#2d8ceb;border-radius:1px;"></div>
<div style="left:1011.5px;top:416.4px;width:3.2px;height:7.8px;background:#2d8ceb;border-radius:1px;"></div>
<div style="left:1004.6px;top:408px;width:9.6px;height:6px;overflow:hidden;"><div style="position:absolute;left:0;top:0;font-size:4.9px;line-height:5.9px;color:#a8a8a8;-webkit-text-stroke:0.1px currentColor;">10:00f</div></div>
<svg style="position:absolute;left:1016.5px;top:417px;" width="6.5" height="6.5" viewBox="0 0 6.5 6.5"><path d="M0.3 0.3H6.2V3.8L3.2 6.2L0.3 3.8Z" fill="#d8d8d8"/></svg>
<svg style="position:absolute;left:1016px;top:428.5px;" width="7" height="6" viewBox="0 0 7 6"><path d="M3.5 0.3L6.7 3L3.5 5.7L0.3 3Z" fill="#d0d0d0"/><path d="M3.5 1.5L5.2 3L3.5 4.5L1.8 3Z" fill="#222"/></svg>
<div style="left:977.7px;top:538.3px;width:29.6px;height:8.8px;background:#a8090f;border-radius:1.2px;"></div>
<div style="left:980.2px;top:539.9px;font-size:4.67px;line-height:5.6px;color:#f0b0b0;font-weight:bold;font-family:'Liberation Sans',sans-serif;letter-spacing:-0.1px;transform:scaleX(0.9);transform-origin:0 50%;">SUBSCRIBE</div>
<div style="left:1.2px;top:564.6px;width:1022.8px;height:8.4px;background:#202020;"></div>
<svg style="position:absolute;left:4.6px;top:566px;" width="7" height="6.5" viewBox="0 0 7 6.5"><rect x="0.5" y="0.5" width="4" height="4" fill="none" stroke="#c8c8c8" stroke-width="0.8"/><rect x="2.5" y="2.3" width="4" height="4" fill="#c8c8c8"/></svg>
<svg style="position:absolute;left:15px;top:565.8px;" width="7" height="7" viewBox="0 0 7 7"><circle cx="3.5" cy="3.5" r="2.8" fill="none" stroke="#2d8ceb" stroke-width="1"/><path d="M2.2 3.6L3.3 4.7L5 2.4" stroke="#2d8ceb" stroke-width="0.8" fill="none"/></svg>
<svg style="position:absolute;left:24.8px;top:566px;" width="6.5" height="6.5" viewBox="0 0 6.5 6.5"><path d="M1 0.5V6M5.5 0.5V6M0.3 3.2H6.2" stroke="#c8c8c8" stroke-width="1"/></svg>
<svg style="position:absolute;left:34px;top:566px;" width="8" height="6.5" viewBox="0 0 8 6.5"><circle cx="3" cy="3" r="2.5" fill="#c8c8c8"/><path d="M5 4H7.5V6H4Z" fill="#c8c8c8"/></svg>
<div style="left:45.7px;top:565.74px;font-size:6.44px;line-height:7.73px;color:#9a9a9a;font-weight:normal;font-family:'Liberation Sans',sans-serif;transform:scaleX(0.9);transform-origin:0 50%;">Frame Render Time:</div>
<div style="left:100.5px;top:565.74px;font-size:6.44px;line-height:7.73px;color:#2aa8a0;font-weight:normal;font-family:'Liberation Sans',sans-serif;transform:scaleX(0.9);transform-origin:0 50%;">2ms</div>
<div style="left:285.4px;top:565px;width:82px;height:7.5px;background:#1c1c1c;"></div>
<div style="left:294.8px;top:565.74px;font-size:6.44px;line-height:7.73px;color:#a8a8a8;font-weight:normal;font-family:'Liberation Sans',sans-serif;transform:scaleX(0.9);transform-origin:0 50%;">Toggle Switches / Modes</div>
<svg style="position:absolute;left:441.5px;top:568.3px;" width="5" height="3" viewBox="0 0 5 3"><path d="M0 2.5L2.5 0L5 2.5Z" fill="#c8c8c8"/></svg>
<div style="left:455px;top:569.6px;width:22px;height:0.8px;background:#444;"></div>
<svg style="position:absolute;left:452px;top:567.4px;" width="5" height="5" viewBox="0 0 5 5"><circle cx="2.5" cy="2.5" r="1.9" fill="none" stroke="#c8c8c8" stroke-width="0.8"/></svg>
<svg style="position:absolute;left:483px;top:567.6px;" width="8" height="4" viewBox="0 0 8 4"><path d="M0 3.5L2.5 0.5L4 2L5.5 0.5L8 3.5Z" fill="#c8c8c8"/></svg>
<div style="left:93.3px;top:25.3px;width:138.7px;height:283.6px;background:#f0f0f0;box-shadow:1px 1px 2px rgba(0,0,0,0.35);"></div>
<div style="left:109.2px;top:29.07px;font-size:6.89px;line-height:8.27px;color:#a3a3a3;font-weight:normal;font-family:'Liberation Sans',sans-serif;transform:scaleX(0.9);transform-origin:0 50%;">Effect Controls</div>
<div style="left:140px;width:82.5px;text-align:right;top:29.070000000000004px;font-size:6.89px;line-height:8.27px;color:#a3a3a3;transform:scaleX(0.9);transform-origin:100% 50%;">F3</div>
<div style="left:109.2px;top:38.87px;font-size:6.89px;line-height:8.27px;color:#a3a3a3;font-weight:normal;font-family:'Liberation Sans',sans-serif;transform:scaleX(0.9);transform-origin:0 50%;">Gaussian Blur</div>
<div style="left:140px;width:82.5px;text-align:right;top:38.87px;font-size:6.89px;line-height:8.27px;color:#a3a3a3;transform:scaleX(0.9);transform-origin:100% 50%;">Ctrl+Alt+Shift+E</div>
<div style="left:109.2px;top:48.57px;font-size:6.89px;line-height:8.27px;color:#a3a3a3;font-weight:normal;font-family:'Liberation Sans',sans-serif;transform:scaleX(0.9);transform-origin:0 50%;">Remove All</div>
<div style="left:140px;width:82.5px;text-align:right;top:48.57px;font-size:6.89px;line-height:8.27px;color:#a3a3a3;transform:scaleX(0.9);transform-origin:100% 50%;">Ctrl+Shift+E</div>
<div style="left:101px;top:57.6px;width:117px;height:0.8px;background:#dcdcdc;"></div>
<div style="left:109.2px;top:61.37px;font-size:6.89px;line-height:8.27px;color:#8f8f8f;font-weight:normal;font-family:'Liberation Sans',sans-serif;transform:scaleX(0.9);transform-origin:0 50%;">3D Channel</div>
<svg style="position:absolute;left:224.4px;top:62.6px;" width="3" height="4.5" viewBox="0 0 3 4.5"><path d="M0.5 0.5L2.3 2.2L0.5 4" stroke="#c0c0c0" stroke-width="0.6" fill="none"/></svg>
<div style="left:109.2px;top:71.28px;font-size:6.89px;line-height:8.27px;color:#8f8f8f;font-weight:normal;font-family:'Liberation Sans',sans-serif;transform:scaleX(0.9);transform-origin:0 50%;">AESweets</div>
<svg style="position:absolute;left:224.4px;top:72.52px;" width="3" height="4.5" viewBox="0 0 3 4.5"><path d="M0.5 0.5L2.3 2.2L0.5 4" stroke="#c0c0c0" stroke-width="0.6" fill="none"/></svg>
<div style="left:109.2px;top:81.2px;font-size:6.89px;line-height:8.27px;color:#8f8f8f;font-weight:normal;font-family:'Liberation Sans',sans-serif;transform:scaleX(0.9);transform-origin:0 50%;">Audio</div>
<svg style="position:absolute;left:224.4px;top:82.44px;" width="3" height="4.5" viewBox="0 0 3 4.5"><path d="M0.5 0.5L2.3 2.2L0.5 4" stroke="#c0c0c0" stroke-width="0.6" fill="none"/></svg>
<div style="left:109.2px;top:91.12px;font-size:6.89px;line-height:8.27px;color:#8f8f8f;font-weight:normal;font-family:'Liberation Sans',sans-serif;transform:scaleX(0.9);transform-origin:0 50%;">BAO</div>
<svg style="position:absolute;left:224.4px;top:92.35999999999999px;" width="3" height="4.5" viewBox="0 0 3 4.5"><path d="M0.5 0.5L2.3 2.2L0.5 4" stroke="#c0c0c0" stroke-width="0.6" fill="none"/></svg>
<div style="left:109.2px;top:101.05px;font-size:6.89px;line-height:8.27px;color:#8f8f8f;font-weight:normal;font-family:'Liberation Sans',sans-serif;transform:scaleX(0.9);transform-origin:0 50%;">Blur &amp; Sharpen</div>
<svg style="position:absolute;left:224.4px;top:102.28px;" width="3" height="4.5" viewBox="0 0 3 4.5"><path d="M0.5 0.5L2.3 2.2L0.5 4" stroke="#c0c0c0" stroke-width="0.6" fill="none"/></svg>
<div style="left:109.2px;top:110.96px;font-size:6.89px;line-height:8.27px;color:#8f8f8f;font-weight:normal;font-family:'Liberation Sans',sans-serif;transform:scaleX(0.9);transform-origin:0 50%;">Boris FX Mocha</div>
<svg style="position:absolute;left:224.4px;top:112.19999999999999px;" width="3" height="4.5" viewBox="0 0 3 4.5"><path d="M0.5 0.5L2.3 2.2L0.5 4" stroke="#c0c0c0" stroke-width="0.6" fill="none"/></svg>
<div style="left:109.2px;top:120.88px;font-size:6.89px;line-height:8.27px;color:#8f8f8f;font-weight:normal;font-family:'Liberation Sans',sans-serif;transform:scaleX(0.9);transform-origin:0 50%;">Channel</div>
<svg style="position:absolute;left:224.4px;top:122.11999999999999px;" width="3" height="4.5" viewBox="0 0 3 4.5"><path d="M0.5 0.5L2.3 2.2L0.5 4" stroke="#c0c0c0" stroke-width="0.6" fill="none"/></svg>
<div style="left:109.2px;top:130.81px;font-size:6.89px;line-height:8.27px;color:#8f8f8f;font-weight:normal;font-family:'Liberation Sans',sans-serif;transform:scaleX(0.9);transform-origin:0 50%;">Cinema 4D</div>
<svg style="position:absolute;left:224.4px;top:132.04px;" width="3" height="4.5" viewBox="0 0 3 4.5"><path d="M0.5 0.5L2.3 2.2L0.5 4" stroke="#c0c0c0" stroke-width="0.6" fill="none"/></svg>
<div style="left:109.2px;top:140.73px;font-size:6.89px;line-height:8.27px;color:#8f8f8f;font-weight:normal;font-family:'Liberation Sans',sans-serif;transform:scaleX(0.9);transform-origin:0 50%;">Color Correction</div>
<svg style="position:absolute;left:224.4px;top:141.96px;" width="3" height="4.5" viewBox="0 0 3 4.5"><path d="M0.5 0.5L2.3 2.2L0.5 4" stroke="#c0c0c0" stroke-width="0.6" fill="none"/></svg>
<div style="left:109.2px;top:150.65px;font-size:6.89px;line-height:8.27px;color:#8f8f8f;font-weight:normal;font-family:'Liberation Sans',sans-serif;transform:scaleX(0.9);transform-origin:0 50%;">Distort</div>
<svg style="position:absolute;left:224.4px;top:151.88px;" width="3" height="4.5" viewBox="0 0 3 4.5"><path d="M0.5 0.5L2.3 2.2L0.5 4" stroke="#c0c0c0" stroke-width="0.6" fill="none"/></svg>
<div style="left:109.2px;top:160.56px;font-size:6.89px;line-height:8.27px;color:#8f8f8f;font-weight:normal;font-family:'Liberation Sans',sans-serif;transform:scaleX(0.9);transform-origin:0 50%;">Expression Controls</div>
<svg style="position:absolute;left:224.4px;top:161.79999999999998px;" width="3" height="4.5" viewBox="0 0 3 4.5"><path d="M0.5 0.5L2.3 2.2L0.5 4" stroke="#c0c0c0" stroke-width="0.6" fill="none"/></svg>
<div style="left:109.2px;top:170.49px;font-size:6.89px;line-height:8.27px;color:#8f8f8f;font-weight:normal;font-family:'Liberation Sans',sans-serif;transform:scaleX(0.9);transform-origin:0 50%;">Generate</div>
<svg style="position:absolute;left:224.4px;top:171.72px;" width="3" height="4.5" viewBox="0 0 3 4.5"><path d="M0.5 0.5L2.3 2.2L0.5 4" stroke="#c0c0c0" stroke-width="0.6" fill="none"/></svg>
<div style="left:109.2px;top:180.41px;font-size:6.89px;line-height:8.27px;color:#8f8f8f;font-weight:normal;font-family:'Liberation Sans',sans-serif;transform:scaleX(0.9);transform-origin:0 50%;">Immersive Video</div>
<svg style="position:absolute;left:224.4px;top:181.64px;" width="3" height="4.5" viewBox="0 0 3 4.5"><path d="M0.5 0.5L2.3 2.2L0.5 4" stroke="#c0c0c0" stroke-width="0.6" fill="none"/></svg>
<div style="left:109.2px;top:190.33px;font-size:6.89px;line-height:8.27px;color:#8f8f8f;font-weight:normal;font-family:'Liberation Sans',sans-serif;transform:scaleX(0.9);transform-origin:0 50%;">Keying</div>
<svg style="position:absolute;left:224.4px;top:191.56px;" width="3" height="4.5" viewBox="0 0 3 4.5"><path d="M0.5 0.5L2.3 2.2L0.5 4" stroke="#c0c0c0" stroke-width="0.6" fill="none"/></svg>
<div style="left:109.2px;top:200.25px;font-size:6.89px;line-height:8.27px;color:#8f8f8f;font-weight:normal;font-family:'Liberation Sans',sans-serif;transform:scaleX(0.9);transform-origin:0 50%;">Matte</div>
<svg style="position:absolute;left:224.4px;top:201.48px;" width="3" height="4.5" viewBox="0 0 3 4.5"><path d="M0.5 0.5L2.3 2.2L0.5 4" stroke="#c0c0c0" stroke-width="0.6" fill="none"/></svg>
<div style="left:109.2px;top:210.17px;font-size:6.89px;line-height:8.27px;color:#8f8f8f;font-weight:normal;font-family:'Liberation Sans',sans-serif;transform:scaleX(0.9);transform-origin:0 50%;">Noise &amp; Grain</div>
<svg style="position:absolute;left:224.4px;top:211.4px;" width="3" height="4.5" viewBox="0 0 3 4.5"><path d="M0.5 0.5L2.3 2.2L0.5 4" stroke="#c0c0c0" stroke-width="0.6" fill="none"/></svg>
<div style="left:109.2px;top:220.09px;font-size:6.89px;line-height:8.27px;color:#8f8f8f;font-weight:normal;font-family:'Liberation Sans',sans-serif;transform:scaleX(0.9);transform-origin:0 50%;">Obsolete</div>
<svg style="position:absolute;left:224.4px;top:221.32px;" width="3" height="4.5" viewBox="0 0 3 4.5"><path d="M0.5 0.5L2.3 2.2L0.5 4" stroke="#c0c0c0" stroke-width="0.6" fill="none"/></svg>
<div style="left:109.2px;top:230.0px;font-size:6.89px;line-height:8.27px;color:#8f8f8f;font-weight:normal;font-family:'Liberation Sans',sans-serif;transform:scaleX(0.9);transform-origin:0 50%;">Perspective</div>
<svg style="position:absolute;left:224.4px;top:231.23999999999998px;" width="3" height="4.5" viewBox="0 0 3 4.5"><path d="M0.5 0.5L2.3 2.2L0.5 4" stroke="#c0c0c0" stroke-width="0.6" fill="none"/></svg>
<div style="left:109.2px;top:239.93px;font-size:6.89px;line-height:8.27px;color:#8f8f8f;font-weight:normal;font-family:'Liberation Sans',sans-serif;transform:scaleX(0.9);transform-origin:0 50%;">Plugin Everything</div>
<svg style="position:absolute;left:224.4px;top:241.16px;" width="3" height="4.5" viewBox="0 0 3 4.5"><path d="M0.5 0.5L2.3 2.2L0.5 4" stroke="#c0c0c0" stroke-width="0.6" fill="none"/></svg>
<div style="left:109.2px;top:249.84px;font-size:6.89px;line-height:8.27px;color:#8f8f8f;font-weight:normal;font-family:'Liberation Sans',sans-serif;transform:scaleX(0.9);transform-origin:0 50%;">Simulation</div>
<svg style="position:absolute;left:224.4px;top:251.07999999999998px;" width="3" height="4.5" viewBox="0 0 3 4.5"><path d="M0.5 0.5L2.3 2.2L0.5 4" stroke="#c0c0c0" stroke-width="0.6" fill="none"/></svg>
<div style="left:109.2px;top:259.76px;font-size:6.89px;line-height:8.27px;color:#8f8f8f;font-weight:normal;font-family:'Liberation Sans',sans-serif;transform:scaleX(0.9);transform-origin:0 50%;">Stylize</div>
<svg style="position:absolute;left:224.4px;top:261.0px;" width="3" height="4.5" viewBox="0 0 3 4.5"><path d="M0.5 0.5L2.3 2.2L0.5 4" stroke="#c0c0c0" stroke-width="0.6" fill="none"/></svg>
<div style="left:109.2px;top:269.69px;font-size:6.89px;line-height:8.27px;color:#8f8f8f;font-weight:normal;font-family:'Liberation Sans',sans-serif;transform:scaleX(0.9);transform-origin:0 50%;">Text</div>
<svg style="position:absolute;left:224.4px;top:270.92px;" width="3" height="4.5" viewBox="0 0 3 4.5"><path d="M0.5 0.5L2.3 2.2L0.5 4" stroke="#c0c0c0" stroke-width="0.6" fill="none"/></svg>
<div style="left:109.2px;top:279.61px;font-size:6.89px;line-height:8.27px;color:#8f8f8f;font-weight:normal;font-family:'Liberation Sans',sans-serif;transform:scaleX(0.9);transform-origin:0 50%;">Time</div>
<svg style="position:absolute;left:224.4px;top:280.84000000000003px;" width="3" height="4.5" viewBox="0 0 3 4.5"><path d="M0.5 0.5L2.3 2.2L0.5 4" stroke="#c0c0c0" stroke-width="0.6" fill="none"/></svg>
<div style="left:109.2px;top:289.52px;font-size:6.89px;line-height:8.27px;color:#8f8f8f;font-weight:normal;font-family:'Liberation Sans',sans-serif;transform:scaleX(0.9);transform-origin:0 50%;">Transition</div>
<svg style="position:absolute;left:224.4px;top:290.76px;" width="3" height="4.5" viewBox="0 0 3 4.5"><path d="M0.5 0.5L2.3 2.2L0.5 4" stroke="#c0c0c0" stroke-width="0.6" fill="none"/></svg>
<div style="left:109.2px;top:299.44px;font-size:6.89px;line-height:8.27px;color:#b9b9b9;font-weight:normal;font-family:'Liberation Sans',sans-serif;transform:scaleX(0.9);transform-origin:0 50%;">Utility</div>
<svg style="position:absolute;left:224.4px;top:300.68px;" width="3" height="4.5" viewBox="0 0 3 4.5"><path d="M0.5 0.5L2.3 2.2L0.5 4" stroke="#c0c0c0" stroke-width="0.6" fill="none"/></svg>
<div style="left:98.1px;top:27.5px;width:123.1px;height:281.9px;background:transparent;border:2.3px solid #ff0000;box-sizing:border-box;"></div>
<svg style="position:absolute;left:104.6px;top:21.8px;" width="5" height="7" viewBox="0 0 5 7"><path d="M0.4 0.4V5.4L1.6 4.4L2.5 6.3L3.4 5.9L2.5 4.1H4.1Z" fill="#fff" stroke="#555" stroke-width="0.45"/></svg>
<svg style="position:absolute;left:220px;top:94px;" width="106" height="12" viewBox="0 0 106 12"><path d="M14 6.1L103.5 7.5" stroke="#ff0000" stroke-width="2.2" stroke-linecap="round"/><path d="M3.7 6L14.8 2.8L14.6 9.5Z" fill="#ff0000"/></svg>
<div style="left:341.8px;top:101.53px;font-size:11.11px;line-height:13.33px;color:#e60000;font-weight:bold;font-family:'Liberation Sans',sans-serif;-webkit-text-stroke:0;transform:scaleX(0.9);transform-origin:0 50%;">Effects Greyed Out</div>
</body></html>
